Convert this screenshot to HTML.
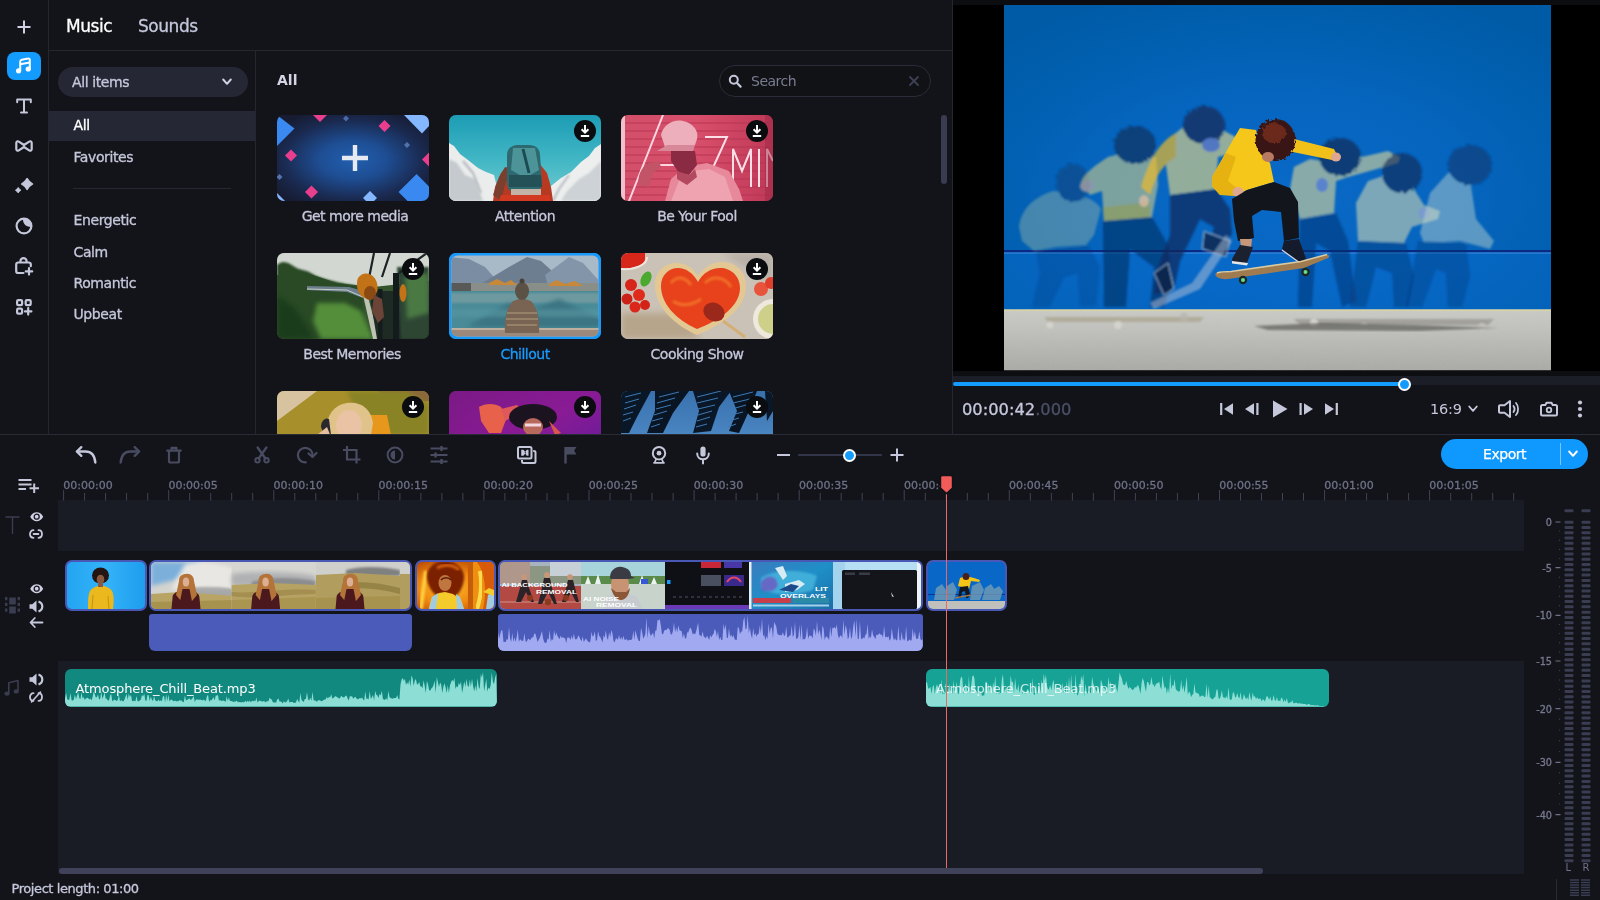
<!DOCTYPE html>
<html lang="en">
<head>
<meta charset="utf-8">
<title>Video Editor</title>
<style>
*{box-sizing:border-box;margin:0;padding:0}
html,body{width:1600px;height:900px;overflow:hidden;background:#131419}
body{position:relative;font-family:"DejaVu Sans","Liberation Sans",sans-serif;color:#c6c8dc;font-size:14px;-webkit-font-smoothing:antialiased}
.abs{position:absolute}
svg{display:block;overflow:visible}
/* borders */
.vline{position:absolute;width:1px;background:#252731}
.hline{position:absolute;height:1px;background:#252731}
/* left bar */
.lb-ic{position:absolute;left:0;width:48px;height:30px;display:flex;align-items:center;justify-content:center}
/* tabs */
.tab{position:absolute;top:15px;font-size:17px;line-height:22px;color:#c6c8dc;white-space:nowrap;letter-spacing:-.45px;-webkit-text-stroke:.32px currentColor}
/* categories */
.cat{position:absolute;left:73.500px;font-size:14px;line-height:18px;color:#c6c8dc;white-space:nowrap;letter-spacing:-.4px;-webkit-text-stroke:.32px currentColor}
/* thumbs */
.th{position:absolute;width:152px;height:86px;border-radius:7px;overflow:hidden;background:#333}
.th svg{width:152px;height:86px}
.lbl{position:absolute;width:172px;text-align:center;font-size:14px;line-height:18px;color:#c6c8dc;white-space:nowrap;letter-spacing:-.5px;-webkit-text-stroke:.32px currentColor}
.dl{position:absolute;width:22px;height:22px;border-radius:50%;background:#0d0e12}
/* timeline */
.tk{position:absolute;left:58px;width:1466px}
.clip{position:absolute;top:560px;height:51px;border:2px solid #4a59b5;border-radius:7px;overflow:hidden;background:#4a59b5}
.rl{position:absolute;top:479.200px;-webkit-text-stroke:.3px currentColor;font-family:"DejaVu Sans","Liberation Sans",sans-serif;font-size:11px;line-height:14px;color:#6f7288;white-space:nowrap}
.ml{position:absolute;width:30px;text-align:right;font-family:"DejaVu Sans","Liberation Sans",sans-serif;font-size:9.700px;line-height:12px;color:#777a90;-webkit-text-stroke:.3px currentColor}
</style>
</head>
<body>
<div id="app" style="position:absolute;left:0;top:0;width:1600px;height:900px;opacity:.999">

<!-- ===== structural lines ===== -->
<div class="vline" style="left:48px;top:0;height:434px"></div>
<div class="hline" style="left:49px;top:49.500px;width:903px"></div>
<div class="vline" style="left:255px;top:50px;height:384px"></div>
<div class="vline" style="left:952px;top:0;height:434px"></div>
<div class="hline" style="left:0;top:434px;width:1600px;background:#2a2c37"></div>

<!-- LEFTBAR -->
<svg class="abs" style="left:17px;top:19.5px" width="14" height="14" viewBox="0 0 14 14"><path d="M7 .5v13M.5 7h13" stroke="#d0d2e4" stroke-width="2" fill="none"/></svg>
<div class="abs" style="left:7px;top:52px;width:34px;height:28px;border-radius:8px;background:#149cff"></div>
<svg class="abs" style="left:15px;top:57px" width="18" height="18" viewBox="0 0 18 18"><path d="M5.2 13.2V4.6c0-1 .6-1.7 1.6-1.9l6.300-1.100c1-.2 1.700.4 1.700 1.400v8.400" fill="none" stroke="#fff" stroke-width="2" stroke-linecap="round" stroke-linejoin="round"/><path d="M5.200 7.200l9.600-1.700" stroke="#fff" stroke-width="2" fill="none"/><circle cx="3.600" cy="13.800" r="2.600" fill="#fff"/><circle cx="13.200" cy="12" r="2.600" fill="#fff"/></svg>
<svg class="abs" style="left:16px;top:98px" width="16" height="16" viewBox="0 0 16 16"><path d="M1.200 4.200V1.500h13.600v2.700M8 1.500v13M5 14.500h6" fill="none" stroke="#c6c8dc" stroke-width="2" stroke-linecap="round" stroke-linejoin="round"/></svg>
<svg class="abs" style="left:15px;top:140px" width="18" height="12" viewBox="0 0 18 12"><path d="M1.300 3c0-1.500 1.300-2.200 2.500-1.400L9 5l5.200-3.400c1.200-.8 2.500-.1 2.500 1.400v6c0 1.500-1.300 2.200-2.500 1.400L9 7l-5.200 3.400C2.600 11.200 1.300 10.500 1.300 9z" fill="none" stroke="#c6c8dc" stroke-width="2.200" stroke-linejoin="round"/></svg>
<svg class="abs" style="left:14px;top:177px" width="20" height="18" viewBox="0 0 20 18"><path d="M13.100 1.400Q15.100 5 18.700 7 15.100 9 13.100 12.600 11.100 9 7.500 7 11.100 5 13.100 1.400z" fill="#c6c8dc" stroke="#c6c8dc" stroke-width="1.200" stroke-linejoin="round"/><path d="M4.200 10.400Q5.200 12.200 7 13.200 5.200 14.200 4.200 16 3.200 14.200 1.400 13.200 3.200 12.200 4.200 10.400z" fill="#c6c8dc" stroke="#c6c8dc" stroke-width=".8" stroke-linejoin="round"/></svg>
<svg class="abs" style="left:15px;top:217px" width="18" height="18" viewBox="0 0 18 18"><circle cx="9" cy="9" r="7.400" fill="none" stroke="#c6c8dc" stroke-width="2.200"/><path d="M8.200 1.800c-.8 4 2 8.200 8 8.200 .2-4.800-3.400-8.400-8-8.200z" fill="#c6c8dc"/><path d="M9.600 2.400c-.2 3 1.800 6 6 6.400" fill="none" stroke="#131419" stroke-width="0"/></svg>
<svg class="abs" style="left:15px;top:256.500px" width="19" height="18" viewBox="0 0 19 18"><path d="M8.500 16H3.300c-1.200 0-2.100-.9-2.100-2.100V7.600c0-1.200.9-2.100 2.100-2.100h10.400c1.200 0 2.100.9 2.100 2.100v1.600" fill="none" stroke="#c6c8dc" stroke-width="2.200" stroke-linecap="round"/><path d="M5.400 5.500V4.300a3.100 3.100 0 0 1 6.200 0v1.200" fill="none" stroke="#c6c8dc" stroke-width="2.200"/><path d="M14 11.200v6.400M10.800 14.400h6.400" stroke="#c6c8dc" stroke-width="2.200" fill="none" stroke-linecap="round"/></svg>
<svg class="abs" style="left:16px;top:298.500px" width="17" height="16" viewBox="0 0 17 16"><rect x="1.100" y="1.100" width="5" height="5" rx="1.200" fill="none" stroke="#c6c8dc" stroke-width="2.200"/><rect x="9.700" y="1.100" width="5" height="5" rx="1.200" fill="none" stroke="#c6c8dc" stroke-width="2.200"/><rect x="1.100" y="9.700" width="5" height="5" rx="1.200" fill="none" stroke="#c6c8dc" stroke-width="2.200"/><path d="M12.200 9.200v6.400M9 12.400h6.400" stroke="#c6c8dc" stroke-width="2.200" fill="none" stroke-linecap="round"/></svg>
<!-- TABS -->
<div class="tab" style="left:66px;color:#fff">Music</div>
<div class="tab" style="left:138px">Sounds</div>
<!-- CATS -->
<div class="abs" style="left:58px;top:67px;width:190px;height:30px;border-radius:15px;background:#262836"></div>
<div class="cat" style="left:72px;top:73px">All items</div>
<svg class="abs" style="left:222px;top:78px" width="10" height="8" viewBox="0 0 10 8"><path d="M1.200 1.500L5 5.800 8.800 1.500" fill="none" stroke="#d0d2e4" stroke-width="2" stroke-linecap="round" stroke-linejoin="round"/></svg>
<div class="abs" style="left:49px;top:110.600px;width:206px;height:30.400px;background:#262836"></div>
<div class="cat" style="top:116px;color:#fff">All</div>
<div class="cat" style="top:148px">Favorites</div>
<div class="hline" style="left:73px;top:188px;width:158px;background:#262833"></div>
<div class="cat" style="top:211px">Energetic</div>
<div class="cat" style="top:243px">Calm</div>
<div class="cat" style="top:274px">Romantic</div>
<div class="cat" style="top:305px">Upbeat</div>
<!-- GRID -->
<svg width="0" height="0" style="position:absolute"><defs>
<filter id="b1" x="-20%" y="-20%" width="140%" height="140%"><feGaussianBlur stdDeviation="1"/></filter>
<filter id="b2" x="-20%" y="-20%" width="140%" height="140%"><feGaussianBlur stdDeviation="2"/></filter>
<filter id="b3" x="-20%" y="-20%" width="140%" height="140%"><feGaussianBlur stdDeviation="3.500"/></filter>
<filter id="b05" x="-20%" y="-20%" width="140%" height="140%"><feGaussianBlur stdDeviation=".5"/></filter>
<symbol id="dlic" viewBox="0 0 22 22"><circle cx="11" cy="11" r="11" fill="#0c0d11"/><path d="M11 5v7.200M7.600 9.200L11 12.600l3.400-3.400" fill="none" stroke="#fff" stroke-width="2" stroke-linejoin="miter"/><path d="M6.800 16h8.400" stroke="#fff" stroke-width="2"/></symbol>
</defs></svg>
<div class="abs" style="left:277px;top:71px;font-size:14px;line-height:18px;font-weight:bold;color:#d4d6e6">All</div>
<div class="abs" style="left:719px;top:65px;width:212px;height:32px;border-radius:16px;border:1px solid #2b2d3a;background:#121317"></div>
<svg class="abs" style="left:728px;top:74px" width="14" height="14" viewBox="0 0 14 14"><circle cx="5.800" cy="5.800" r="4" fill="none" stroke="#c6c8dc" stroke-width="2"/><path d="M9 9l3.600 3.600" stroke="#c6c8dc" stroke-width="2.200" stroke-linecap="round"/></svg>
<div class="abs" style="left:751px;top:72px;font-size:14px;line-height:18px;color:#7a7d92;letter-spacing:-.5px">Search</div>
<svg class="abs" style="left:909px;top:76px" width="10" height="10" viewBox="0 0 10 10"><path d="M1 1l8 8M9 1L1 9" stroke="#3f4256" stroke-width="1.800" stroke-linecap="round"/></svg>
<div class="abs" style="left:941px;top:115px;width:6px;height:69px;border-radius:3px;background:#3a3d52"></div>

<!-- thumb 1 -->
<div class="th" style="left:277px;top:115px"><svg viewBox="0 0 152 86">
<defs><radialGradient id="g1" cx="50%" cy="52%" r="62%"><stop offset="0" stop-color="#2360b0"/><stop offset=".35" stop-color="#1f4f95"/><stop offset=".75" stop-color="#1b2a50"/><stop offset="1" stop-color="#181d33"/></radialGradient></defs>
<rect width="152" height="86" fill="url(#g1)"/>
<path d="M0 0v31l17.500-17.500z" fill="#3b8af2"/>
<path d="M36 0l7 7 7-7z" fill="#ea3f8e"/>
<path d="M69 0.500l3 3-3 3-3-3z" fill="#4a6aa8"/>
<path d="M107.500 5l6 6-6 6-6-6z" fill="#ea3f8e"/>
<path d="M127 0h25v11l-7 7.500z" fill="#86b8ff"/>
<path d="M130 27l3 3-3 3-3-3z" fill="#5474ae"/>
<path d="M14 34.500l6 6-6 6-6-6z" fill="#ea3f8e"/>
<path d="M152 37.500l-7 7 7 7z" fill="#ea3f8e"/>
<path d="M2.500 59l3 3-3 3-3-3z" fill="#5474ae"/>
<path d="M34.500 70.500l6.500 6.500-6.500 6.500-6.500-6.500z" fill="#ea3f8e"/>
<path d="M93 76l7 7-3 3H89l-3-3z" fill="#86b8ff"/>
<path d="M139.600 59l12.400 12.400V86h-21.500l-9-9z" fill="#3b8af2"/>
<path d="M0 78l8 8H0z" fill="#86b8ff"/>
<path d="M78 30v26M65 43h26" stroke="#e8eaf4" stroke-width="4.400"/>
</svg></div>

<!-- thumb 2 attention -->
<div class="th" style="left:449px;top:115px"><svg viewBox="0 0 152 86">
<defs><linearGradient id="g2" x1="0" y1="0" x2="0" y2="1"><stop offset="0" stop-color="#1d9db6"/><stop offset=".55" stop-color="#45b9c6"/><stop offset="1" stop-color="#74ccd0"/></linearGradient></defs>
<rect width="152" height="86" fill="url(#g2)"/>
<path d="M0 28l5 3 6 8 8 6 10 8 8 4 8 3 2 8 -2 18H0z" fill="#eceeee"/>
<path d="M0 44l8 4 8 12 10 4 8 22H0z" fill="#c5cbce" filter="url(#b1)"/>
<path d="M14 46l10 12 8 20" stroke="#b0b6ba" stroke-width="2" fill="none" filter="url(#b1)"/>
<path d="M152 29l-6 4-6 8-8 6-10 10-10 6-10 8-8 8-2 7h60z" fill="#eef0f0"/>
<path d="M152 46l-12 12-10 6-12 12-6 10h40z" fill="#cdd3d6" filter="url(#b1)"/>
<path d="M120 60l-10 14-6 12" stroke="#b4babd" stroke-width="2" fill="none" filter="url(#b1)"/>
<path d="M44 86l2-14 6-14 8-8 30-2 8 10 4 14 2 14z" fill="#b83a22"/>
<path d="M44 80l6-18 6-10 6 2-6 16-4 16z" fill="#7c4030"/>
<path d="M58 40c0-6 4-10 12-10h10c7 0 11 4 11 10l2 28c0 6-4 9-9 9H66c-5 0-8-3-8-9z" fill="#2f6a70"/>
<path d="M64 33h22l4 22-14 8-14-8z" fill="#4e959a"/>
<path d="M74 34l6 24" stroke="#1f4c52" stroke-width="3" filter="url(#b05)"/>
<path d="M60 60h32l1 12H60z" fill="#245258"/>
<path d="M62 74h30v6H62z" fill="#c4b4a8"/>
<path d="M52 80h48l2 6H50z" fill="#d23a22"/>
</svg></div>
<svg class="abs" style="left:573.800px;top:120.200px" width="22" height="22"><use href="#dlic"/></svg>

<!-- thumb 3 be your fool -->
<div class="th" style="left:621px;top:115px"><svg viewBox="0 0 152 86">
<defs><linearGradient id="g3" x1="0" y1="0" x2="1" y2="0"><stop offset="0" stop-color="#d4506a"/><stop offset=".5" stop-color="#d9506c"/><stop offset="1" stop-color="#c03a58"/></linearGradient></defs>
<rect width="152" height="86" fill="url(#g3)"/>
<g stroke="#b83654" stroke-width="1"><path d="M0 8h152M0 16h152M0 24h152M0 32h152M0 40h152M0 48h152M0 56h152M0 64h152M0 72h152M0 80h152"/></g>
<path d="M42 0L8 86M36 50h22" stroke="#ffd6e0" stroke-width="2" fill="none"/>
<path d="M84 22h22L84 70M112 72V34l9 22 9-22v38M138 34v38M146 72V34l6 12" stroke="#ffe0e8" stroke-width="2" fill="none"/>
<path d="M44 86l6-22 14-12 22-4 22 8 10 18 4 12z" fill="#e88a9c"/>
<path d="M50 86l8-20 12-10 18-2 16 8 8 24z" fill="#f0a4b2"/>
<path d="M18 70c-2-8 2-18 10-22l10-2 2 6-8 6-4 14z" fill="#c45468"/>
<path d="M40 20c2-10 12-16 22-14 10 2 16 10 14 18l-2 6-30 2z" fill="#eeb0bc"/>
<path d="M36 36l10-6h28l-2 6z" fill="#d88a9a"/>
<path d="M50 36h24l2 14-8 10-10-2-8-12z" fill="#8c2c44"/>
<path d="M56 56l12 4 6-6 2 8-10 8-10-6z" fill="#b44a60"/>
<rect x="0" y="0" width="4" height="86" fill="#f4c0cc"/>
<rect x="144" y="0" width="8" height="86" fill="#9c2a46" opacity=".5"/>
</svg></div>
<svg class="abs" style="left:745.800px;top:120.200px" width="22" height="22"><use href="#dlic"/></svg>

<div class="lbl" style="left:269px;top:207px">Get more media</div>
<div class="lbl" style="left:439px;top:207px">Attention</div>
<div class="lbl" style="left:611px;top:207px">Be Your Fool</div>

<!-- thumb 4 best memories -->
<div class="th" style="left:277px;top:253px"><svg viewBox="0 0 152 86">
<rect width="152" height="86" fill="#35562f"/>
<path d="M0 0h152v28L96 34 60 30 30 20 0 22z" fill="#d3d9d2"/>
<path d="M0 12c6-6 12-2 18 2s10 2 16 6 14 6 22 8 18 4 30 6v52H0z" fill="#2b4c27" filter="url(#b1)"/>
<path d="M40 50l28 0 16 8 12 28H44l-8-18z" fill="#558f3a" filter="url(#b2)"/>
<path d="M0 44c10 4 18 10 24 20s10 14 12 22H0z" fill="#1f3d1e" filter="url(#b2)"/>
<path d="M30 33l42 1 14 4 8 10-8-3-16-6-40-2z" fill="#6d7f8e"/>
<path d="M30 36l40 1 16 7" stroke="#c9cfc8" stroke-width="1" fill="none"/>
<path d="M86 42l10 44h6l-12-46z" fill="#bfc4b4"/>
<path d="M92 38h60v48H100z" fill="#1f2c26"/>
<path d="M120 14h32v72h-28z" fill="#2f4736" filter="url(#b1)"/>
<path d="M128 24l24-4v40l-22 6z" fill="#4c7a44" filter="url(#b2)"/>
<path d="M97 0l-6 30M113 0l-8 24M150 0l-28 20" stroke="#1c2426" stroke-width="2.200"/>
<path d="M116 20h6v66h-6zM101 36h4.500v50H101z" fill="#151c1e"/>
<path d="M84 22c6-4 14 0 16 8s-2 16-8 16-12-6-12-14 2-8 4-10z" fill="#c47418"/>
<ellipse cx="93" cy="40" rx="6" ry="7" fill="#8c4a14"/>
<path d="M97 42l8 4 2 18-6 6-6-12z" fill="#6c4438"/>
<ellipse cx="126" cy="40" rx="3.500" ry="9" fill="#c47418"/>
</svg></div>
<svg class="abs" style="left:401.800px;top:258.200px" width="22" height="22"><use href="#dlic"/></svg>

<!-- thumb 5 chillout (selected) -->
<div class="th" style="left:449px;top:253px;background:#1a9bfc"><svg viewBox="0 0 152 86">
<defs><clipPath id="c5"><rect x="2.500" y="2.500" width="147" height="81" rx="6"/></clipPath></defs>
<rect width="152" height="86" fill="#1a9bfc"/>
<g clip-path="url(#c5)">
<rect width="152" height="86" fill="#a9bac8"/>
<path d="M0 4l20 2 16 8 14 16H0z" fill="#7b8ea4"/>
<path d="M30 32l30-18 18-10 14 4 20 18 10 6H30z" fill="#6f7f92"/>
<path d="M96 22l24-18 14 6 18 20v6H100z" fill="#8496aa"/>
<rect x="0" y="30" width="152" height="10" fill="#8a8f8a"/>
<path d="M0 30h22v8H0z" fill="#5a5a58"/>
<path d="M40 30l8-4 8 4 6-3 6 5H40zM100 31l8-4 8 4 10-3 8 5h-34z" fill="#c88a3a"/>
<rect x="0" y="38" width="152" height="40" fill="#4a8c98"/>
<path d="M0 40h152v10H0z" fill="#6e9aa0" filter="url(#b1)"/>
<path d="M20 72l40-22 20 8 30-12 42 20v8H20z" fill="#3c7684" filter="url(#b2)"/>
<path d="M0 56h152v8H0z" fill="#5a9aa4" opacity=".6" filter="url(#b2)"/>
<rect x="0" y="75" width="152" height="11" fill="#9c8a7c"/>
<path d="M0 75h152v2H0z" fill="#c0b0a0"/>
<path d="M56 80c-1-14 2-26 8-32l6-2h6l6 2c6 6 9 18 8 32z" fill="#7a6454"/>
<path d="M58 60h30M57 66h32M58 72h30" stroke="#a08a70" stroke-width="1.500"/>
<ellipse cx="73" cy="38" rx="7" ry="9" fill="#5c5246"/>
<ellipse cx="73" cy="28" rx="2.500" ry="2.500" fill="#4a423a"/>
</g>
</svg></div>

<!-- thumb 6 cooking show -->
<div class="th" style="left:621px;top:253px"><svg viewBox="0 0 152 86">
<rect width="152" height="86" fill="#cbc3b8"/>
<path d="M0 60h60l20 26H0z" fill="#b8a68c" filter="url(#b3)"/>
<path d="M100 0h52v30z" fill="#b8b0a8" filter="url(#b3)"/>
<path d="M0 0h24v6c0 6-10 10-24 9z" fill="#d8281c"/>
<path d="M0 16c14 1 26-4 26-12" fill="none" stroke="#efe8e0" stroke-width="2"/>
<ellipse cx="25" cy="26" rx="5" ry="8" fill="#4caa30" transform="rotate(25 25 26)"/>
<path d="M76 82C50 70 34 52 34 32c0-14 10-22 22-22 9 0 16 5 21 13 5-8 14-14 24-14 14 0 24 10 24 24 0 22-22 38-49 49z" fill="#e4c994"/>
<path d="M76 76C54 66 40 50 40 33c0-11 8-18 17-18 8 0 15 5 20 14 5-9 13-14 22-14 11 0 20 8 20 20 0 18-20 32-43 41z" fill="#e8431c"/>
<path d="M50 30c6-8 14-6 20 2M84 30c8-8 20-6 26 4M52 48c8 6 20 4 28-2" stroke="#f2702a" stroke-width="3" fill="none" filter="url(#b1)"/>
<ellipse cx="93" cy="59" rx="11" ry="9" fill="#9c2a1c" transform="rotate(25 93 59)"/>
<path d="M102 68l22 16" stroke="#d4b078" stroke-width="3"/>
<circle cx="10" cy="32" r="6" fill="#d8261a"/><circle cx="18" cy="42" r="6" fill="#e02c1c"/><circle cx="6" cy="46" r="5.500" fill="#cc2218"/><circle cx="14" cy="54" r="5.500" fill="#dc281a"/><circle cx="24" cy="52" r="5" fill="#d42418"/>
<circle cx="140" cy="36" r="7" fill="#e8543c"/><circle cx="150" cy="30" r="6" fill="#e0402c"/>
<circle cx="152" cy="66" r="20" fill="#efe9de"/><circle cx="152" cy="66" r="15" fill="#cfd08a"/>
</svg></div>
<svg class="abs" style="left:745.800px;top:258.200px" width="22" height="22"><use href="#dlic"/></svg>

<div class="lbl" style="left:266px;top:345px">Best Memories</div>
<div class="lbl" style="left:439px;top:345px;color:#1a9bfc">Chillout</div>
<div class="lbl" style="left:611px;top:345px">Cooking Show</div>

<!-- row 3 (clipped at 433) -->
<div class="abs" style="left:277px;top:391px;width:496px;height:43px;overflow:hidden">
<div class="th" style="left:0;top:0"><svg viewBox="0 0 152 86">
<rect width="152" height="86" fill="#a8902c"/>
<path d="M0 0h40L0 30z" fill="#d8c4a0"/>
<path d="M100 0h52v10l-30 2z" fill="#8c6a3c"/>
<path d="M70 0h60l22 14v30H90z" fill="#8a8428" filter="url(#b2)"/>
<path d="M88 24h22l4 20H92z" fill="#e8981c"/>
<path d="M50 42c-2-16 6-28 20-30s24 6 26 20l-2 12-40 2z" fill="#e0c48c"/>
<ellipse cx="72" cy="34" rx="13" ry="15" fill="#eac4a4"/>
<path d="M44 36c0-6 4-10 8-8l2 16-6 2z" fill="#2a2a30"/>
<path d="M40 44l10-8 4 10z" fill="#e8c0a0"/>
</svg></div>
<div class="th" style="left:172px;top:0"><svg viewBox="0 0 152 86">
<defs><linearGradient id="g8" x1="0" y1="0" x2="1" y2="1"><stop offset="0" stop-color="#7c1a86"/><stop offset=".5" stop-color="#8a1c96"/><stop offset="1" stop-color="#5c1c9c"/></linearGradient></defs>
<rect width="152" height="86" fill="url(#g8)"/>
<path d="M30 16c6-4 16-4 22 0l6 10-6 16H40l-8-12z" fill="#e8624c"/>
<path d="M52 18l16-4 6 6-18 10z" fill="#e05a5c"/>
<ellipse cx="84" cy="26" rx="24" ry="13" fill="#1c1420"/>
<ellipse cx="84" cy="36" rx="10" ry="9" fill="#b86a5c"/>
<path d="M76 34h16" stroke="#f4d8e0" stroke-width="3"/>
<path d="M100 30l12 12-6 2z" fill="#d8584c"/>
</svg></div>
<div class="th" style="left:344px;top:0"><svg viewBox="0 0 152 86">
<defs><linearGradient id="g9" x1="0" y1="0" x2="0" y2="1"><stop offset="0" stop-color="#3a72ae"/><stop offset=".5" stop-color="#4a86c2"/><stop offset="1" stop-color="#b0689c"/></linearGradient></defs>
<rect width="152" height="86" fill="url(#g9)"/>
<path d="M0 0h30L16 26 8 42H0z" fill="#0b1828"/>
<path d="M34 0h34L52 22 42 42H26l8-22z" fill="#0a1624"/>
<path d="M72 0h38L98 16 90 40 72 42l6-22z" fill="#0b1828"/>
<path d="M108 0h28l-8 20-10 22-10-2 8-20z" fill="#0a1624"/>
<path d="M144 0h8v20l-6 10z" fill="#0b1828"/>
<g stroke="#3f7ab6" stroke-width="1" fill="none"><path d="M4 6l16-4M4 12l14-4M3 18l12-4M2 24l10-3M2 30l8-3M38 6l20-5M36 12l18-5M35 18l15-4M33 24l13-4M31 30l11-3M30 36l9-3M76 6l24-6M76 12l21-5M77 18l17-4M77 24l14-4M76 30l13-4M75 36l11-3M112 6l20-5M112 12l17-4M111 18l14-4M110 24l12-3M108 30l10-3M107 36l8-3"/></g>
</svg></div>
</div>
<svg class="abs" style="left:401.800px;top:396.200px" width="22" height="22"><use href="#dlic"/></svg>
<svg class="abs" style="left:573.800px;top:396.200px" width="22" height="22"><use href="#dlic"/></svg>
<svg class="abs" style="left:745.800px;top:396.200px" width="22" height="22"><use href="#dlic"/></svg>
<!-- PREVIEW -->
<div class="abs" style="left:953px;top:0;width:647px;height:434px;background:#131419"></div>
<div class="abs" style="left:953px;top:0;width:647px;height:5px;background:#0d0e12"></div>
<div class="abs" style="left:953px;top:5px;width:647px;height:366px;background:#000"></div>
<div class="abs" style="left:953px;top:371px;width:647px;height:5px;background:#0e0f13"></div>
<div class="abs" style="left:953px;top:376px;width:647px;height:9px;background:#1c1e28"></div>
<svg class="abs" style="left:1004px;top:5px" width="547" height="365.500" viewBox="0 0 547 365.500">
<defs>
<radialGradient id="wall" cx="50%" cy="62%" r="70%"><stop offset="0" stop-color="#0a6ac8"/><stop offset=".45" stop-color="#0766c0"/><stop offset=".8" stop-color="#0260b0"/><stop offset="1" stop-color="#005ca8"/></radialGradient>
<linearGradient id="flr" x1="0" y1="0" x2="0" y2="1"><stop offset="0" stop-color="#cdcec9"/><stop offset=".35" stop-color="#c2c3be"/><stop offset="1" stop-color="#a9aaa6"/></linearGradient>
<filter id="pb1" x="-10%" y="-10%" width="120%" height="120%"><feGaussianBlur stdDeviation="1.200"/></filter>
<filter id="pb2" x="-10%" y="-10%" width="120%" height="120%"><feGaussianBlur stdDeviation="2.500"/></filter>
<filter id="hairf" x="-20%" y="-20%" width="140%" height="140%"><feTurbulence type="fractalNoise" baseFrequency=".35" numOctaves="2" seed="3" result="n"/><feDisplacementMap in="SourceGraphic" in2="n" scale="5"/></filter>
<filter id="grain" x="0" y="0" width="100%" height="100%"><feTurbulence type="fractalNoise" baseFrequency=".9" numOctaves="2" seed="7"/><feColorMatrix type="matrix" values="0 0 0 0 .5  0 0 0 0 .5  0 0 0 0 .48  0 0 0 .55 0"/><feComposite in2="SourceGraphic" operator="in"/></filter>
<clipPath id="vclip"><rect width="547" height="365.500"/></clipPath>
</defs>
<g clip-path="url(#vclip)">
<rect width="547" height="306" fill="url(#wall)"/>
<rect y="247" width="547" height="59" fill="#0d70da" opacity=".3"/>
<rect y="245" width="547" height="2.400" fill="#0a2a86"/>
<rect y="247.400" width="547" height="1.200" fill="#4a9ae8" opacity=".7"/>
<rect y="304.500" width="547" height="61" fill="url(#flr)"/>
<rect y="304.500" width="547" height="61" fill="#fff" filter="url(#grain)" opacity=".5"/>
<rect y="304.500" width="547" height="1.600" fill="#d8d4a8"/>

<!-- ghost figures -->
<g filter="url(#pb1)">
 <!-- G1 -->
 <g opacity=".32">
  <path d="M15 222C17 204 30 192 49 186L72 190C86 192 94 198 97 204L90 230 82 240 52 242 30 246 18 236Z" fill="#cfd6a0"/>
  <ellipse cx="69" cy="178" rx="17" ry="19" fill="#14284e" filter="url(#hairf)"/>
  <path d="M32 246L84 240 96 262 92 301H76L74 268 60 272 46 302H28L36 268Z" fill="#0a2c62" opacity=".6"/>
 </g>
 <!-- G2 -->
 <g opacity=".58">
  <path d="M77 178C80 168 92 160 104 152L128 146 152 152 154 180 148 212 100 216 98 186 86 190Z" fill="#d4cf8a"/>
  <path d="M99 202L146 197 146 214 100 217Z" fill="#e8c838"/>
  <ellipse cx="131" cy="140" rx="21" ry="19" fill="#16264a" filter="url(#hairf)"/>
  <ellipse cx="83" cy="181" rx="7" ry="6" fill="#e8c0a8"/>
  <path d="M99 216L148 212 164 240 168 280 160 302H146L150 262 126 244 122 302H100Z" fill="#0c2c60"/>
 </g>
 <!-- G3 -->
 <g opacity=".70">
  <path d="M172 128L186 116 212 122 236 134 236 146 214 152 212 184 166 190 162 160Z" fill="#d0cc8c"/>
  <path d="M172 128C160 134 146 150 137 182L146 190C152 170 160 158 172 152Z" fill="#ecbc2c"/>
  <ellipse cx="200" cy="120" rx="21" ry="19" fill="#1a2a54" filter="url(#hairf)"/>
  <ellipse cx="207" cy="140" rx="9" ry="7" fill="#7480c4"/>
  <ellipse cx="140" cy="196" rx="5" ry="6" fill="#e8c0a8"/>
  <path d="M166 190L212 184 226 204 228 228 216 250 204 244 210 222 196 214 176 256 170 284 150 290 152 268 166 230Z" fill="#0c2a5c"/>
  <path d="M200 226L226 236 222 252 198 244Z" fill="#0a1a38" stroke="#c8d4e8" stroke-width="1"/>
  <path d="M150 268L164 258 170 284 160 290Z" fill="#0a1a38" stroke="#c8d4e8" stroke-width="1"/>
 </g>
 <path d="M222 230L228 236 196 284 150 304 146 298 188 278Z" fill="#b8c4d8" opacity=".5"/>
 <!-- G4 -->
 <g opacity=".64">
  <path d="M290 162L306 154 332 158 384 146 396 152 394 158 344 172 332 176 330 208 296 214 286 184Z" fill="#d2d29c"/>
  <ellipse cx="336" cy="152" rx="21" ry="19" fill="#15264e" filter="url(#hairf)"/>
  <ellipse cx="318" cy="180" rx="6" ry="7" fill="#8a94d4"/>
  <path d="M296 214L332 208 344 236 352 296 338 302 326 246 312 238 308 302H294Z" fill="#0c3270" opacity=".8"/>
 </g>
 <!-- G5 -->
 <g opacity=".6">
  <path d="M352 198L364 176 388 168 406 178 420 200 436 206 434 214 408 222 400 238 354 236Z" fill="#ccd4b4"/>
  <ellipse cx="398" cy="168" rx="20" ry="20" fill="#142650" filter="url(#hairf)"/>
  <ellipse cx="420" cy="208" rx="6" ry="6" fill="#c8c0d8"/>
  <path d="M354 236L402 238 410 272 404 302H390L388 268 372 262 362 302H346Z" fill="#0c3474" opacity=".7"/>
 </g>
 <!-- G6 -->
 <g opacity=".46">
  <path d="M416 228L426 188 444 168 466 174 472 214 490 236 486 244 456 236 420 238Z" fill="#c4d8d0"/>
  <ellipse cx="466" cy="160" rx="22" ry="20" fill="#142c5c" filter="url(#hairf)"/>
  <path d="M414 236L462 238 466 272 458 302H444L442 268 432 264 418 302H402Z" fill="#0c3474" opacity=".7"/>
 </g>
 <!-- ghost boards on floor -->
 <path d="M40 312h160l-4 5H44z" fill="#a9a48c" opacity=".7"/>
 <path d="M290 314h200l-6 6H296z" fill="#8c8a84" opacity=".6"/>
 <circle cx="46" cy="320" r="3.500" fill="#d8d8d0" opacity=".8"/><circle cx="114" cy="320" r="4" fill="#d8d8d0" opacity=".8"/><circle cx="180" cy="312" r="4" fill="#b8b8b0" opacity=".8"/>
 <circle cx="310" cy="318" r="4" fill="#e0e0da" opacity=".8"/><circle cx="360" cy="322" r="4" fill="#c8c8c0" opacity=".8"/><circle cx="478" cy="322" r="4" fill="#c8c8c0" opacity=".8"/>
</g>
<!-- floor shadow -->
<path d="M250 321l70-3 90 2 84 3-80 3-150-1z" fill="#4c4c4a" opacity=".6" filter="url(#pb1)"/>

<!-- main figure -->
<g>
 <!-- right arm -->
 <path d="M286 133L330 144 333 150 328 155 284 146Z" fill="#f2c21a"/>
 <ellipse cx="332" cy="152" rx="5" ry="4.500" fill="#e0a890"/>
 <!-- hoodie -->
 <path d="M236 123L252 125 258 150 266 158 270 177 243 185 232 190 216 190 208 181 208 172 226 140Z" fill="#f6c81c"/>
 <path d="M208 181L208 172 222 148 232 152 224 176 234 184 230 191 216 190Z" fill="#e6b312"/>
 <ellipse cx="234" cy="187" rx="5.500" ry="5" fill="#e0a890"/>
 <!-- pants -->
 <path d="M228 194L243 185 270 177 286 183 294 197 295 233 280 236 277 207 258 205 248 211 250 233 234 236 230 216Z" fill="#14161e"/>
 <path d="M236 234h12l-1 9h-10z" fill="#c89878"/>
 <!-- shoes -->
 <path d="M228 254L236 240 249 242 243 258 229 258Z" fill="#1c2230"/><path d="M228 256l16 2-1 2.500-15-2z" fill="#e8e8e8"/>
 <path d="M280 236L295 234 302 254 296 258 278 244Z" fill="#161c2c"/><path d="M278 245l18 13" stroke="#d8d8e0" stroke-width="1.200"/>
 <!-- hair -->
 <ellipse cx="271.500" cy="135" rx="20" ry="21" fill="#3a1812" filter="url(#hairf)"/>
 <ellipse cx="270" cy="128" rx="12" ry="10" fill="#6c2c1c" filter="url(#hairf)"/>
 <ellipse cx="264" cy="152" rx="6" ry="5" fill="#b87c64"/>
 <!-- skateboard -->
 <path d="M212 268c3-1 8-1 14-1l70-10 26-7c3-1 4 2 2 3l-24 10-76 11c-8 1-15-3-12-6z" fill="#a07c50"/>
 <path d="M213 268c3-1 8-1.500 14-1.500l70-10 26-7" stroke="#dccaa0" stroke-width="1.600" fill="none"/>
 <circle cx="239" cy="275" r="4.200" fill="#1c2a20"/><circle cx="239" cy="275" r="2" fill="#6adc8c"/>
 <circle cx="301.500" cy="267" r="4.200" fill="#1c2a20"/><circle cx="301.500" cy="267" r="2" fill="#6adc8c"/>
</g>
</g>
</svg>

<!-- progress -->
<div class="abs" style="left:953px;top:382px;width:451px;height:4px;border-radius:2px;background:#149cff"></div>
<div class="abs" style="left:1397.500px;top:377.500px;width:13px;height:13px;border-radius:50%;background:#149cff;border:2px solid #fff"></div>
<!-- time -->
<div class="abs" style="left:962px;top:400px;font-family:'DejaVu Sans','Liberation Sans',sans-serif;font-size:16.300px;line-height:20px;color:#c6c8dc;-webkit-text-stroke:.32px currentColor;white-space:nowrap">00:00:42<span style="color:#4d5066">.000</span></div>
<!-- transport -->
<svg class="abs" style="left:1219px;top:401px" width="16" height="16" viewBox="0 0 16 16"><path d="M2.200 2v12" stroke="#c6c8dc" stroke-width="2.200"/><path d="M14 2.200v11.600L5 8z" fill="#c6c8dc"/></svg>
<svg class="abs" style="left:1244px;top:401px" width="16" height="16" viewBox="0 0 16 16"><path d="M13.400 2v12" stroke="#c6c8dc" stroke-width="2.200"/><path d="M10 2.200v11.600L1 8z" fill="#c6c8dc"/></svg>
<svg class="abs" style="left:1271px;top:399px" width="18" height="20" viewBox="0 0 18 20"><path d="M2 1.500v17L16.500 10z" fill="#c6c8dc"/></svg>
<svg class="abs" style="left:1298px;top:401px" width="16" height="16" viewBox="0 0 16 16"><path d="M2.600 2v12" stroke="#c6c8dc" stroke-width="2.200"/><path d="M6 2.200v11.600L15 8z" fill="#c6c8dc"/></svg>
<svg class="abs" style="left:1323px;top:401px" width="16" height="16" viewBox="0 0 16 16"><path d="M13.800 2v12" stroke="#c6c8dc" stroke-width="2.200"/><path d="M2 2.200v11.600L11 8z" fill="#c6c8dc"/></svg>
<div class="abs" style="left:1430px;top:399px;font-family:'DejaVu Sans','Liberation Sans',sans-serif;font-size:14.500px;line-height:20px;color:#c6c8dc;letter-spacing:-.2px">16:9</div>
<svg class="abs" style="left:1468px;top:405px" width="10" height="8" viewBox="0 0 10 8"><path d="M1.200 1.500L5 5.800 8.800 1.500" fill="none" stroke="#c6c8dc" stroke-width="1.800" stroke-linecap="round" stroke-linejoin="round"/></svg>
<svg class="abs" style="left:1497px;top:399px" width="24" height="20" viewBox="0 0 24 20"><path d="M2 7.200c0-.6.400-1 1-1h4.500L13 2v16l-5.500-4.200H3c-.6 0-1-.4-1-1z" fill="none" stroke="#c6c8dc" stroke-width="2" stroke-linejoin="round"/><path d="M16.500 7c1.200 1.600 1.200 4.400 0 6" fill="none" stroke="#c6c8dc" stroke-width="1.800" stroke-linecap="round"/><path d="M19 4c2.800 3 2.800 9 0 12" fill="none" stroke="#c6c8dc" stroke-width="1.800" stroke-linecap="round"/></svg>
<svg class="abs" style="left:1540px;top:401px" width="18" height="16" viewBox="0 0 18 16"><path d="M2.500 4h2.800l1.200-2.200h5l1.200 2.200h2.800c.8 0 1.500.7 1.500 1.500v7.500c0 .8-.7 1.500-1.500 1.500h-13c-.8 0-1.500-.7-1.500-1.500V5.500c0-.8.700-1.500 1.500-1.500z" fill="none" stroke="#c6c8dc" stroke-width="2" stroke-linejoin="round"/><circle cx="9" cy="9" r="2.300" fill="none" stroke="#c6c8dc" stroke-width="1.800"/></svg>
<svg class="abs" style="left:1577px;top:399px" width="6" height="20" viewBox="0 0 6 20"><circle cx="3" cy="3.500" r="2.100" fill="#c6c8dc"/><circle cx="3" cy="10" r="2.100" fill="#c6c8dc"/><circle cx="3" cy="16.500" r="2.100" fill="#c6c8dc"/></svg>
<!-- TOOLBAR -->
<!-- undo -->
<svg class="abs" style="left:75px;top:446px" width="22" height="18" viewBox="0 0 22 18"><path d="M6.300 1.200L1.800 5.500l4.500 4.300" fill="none" stroke="#c6c8dc" stroke-width="2.400" stroke-linecap="round" stroke-linejoin="round"/><path d="M2.500 5.500h8c5.500 0 9.200 3.800 9.800 11" fill="none" stroke="#c6c8dc" stroke-width="2.400" stroke-linecap="round"/></svg>
<!-- redo -->
<svg class="abs" style="left:119px;top:446px" width="22" height="18" viewBox="0 0 22 18"><path d="M15.700 1.200l4.500 4.300-4.500 4.300" fill="none" stroke="#4a4d62" stroke-width="2.400" stroke-linecap="round" stroke-linejoin="round"/><path d="M19.500 5.500h-8C6 5.500 2.300 9.300 1.700 16.500" fill="none" stroke="#4a4d62" stroke-width="2.400" stroke-linecap="round"/></svg>
<!-- trash -->
<svg class="abs" style="left:166px;top:446px" width="16" height="18" viewBox="0 0 16 18"><path d="M1.200 4.600h13.600M5.600 4V1.800h4.800V4" fill="none" stroke="#4a4d62" stroke-width="2.200" stroke-linecap="round" stroke-linejoin="round"/><path d="M3 5v10c0 .8.700 1.500 1.500 1.500h7c.8 0 1.500-.7 1.500-1.500V5" fill="none" stroke="#4a4d62" stroke-width="2.200"/></svg>
<!-- scissors -->
<svg class="abs" style="left:254px;top:446px" width="16" height="18" viewBox="0 0 16 18"><path d="M3.600 1.500l7.800 11M12.400 1.500l-7.800 11" stroke="#4a4d62" stroke-width="2.300" fill="none" stroke-linecap="round"/><circle cx="3.500" cy="14.300" r="2.200" fill="none" stroke="#4a4d62" stroke-width="2"/><circle cx="12.500" cy="14.300" r="2.200" fill="none" stroke="#4a4d62" stroke-width="2"/></svg>
<!-- rotate -->
<svg class="abs" style="left:296px;top:445px" width="22" height="20" viewBox="0 0 22 20"><path d="M16.500 10.500A7.300 7.300 0 1 0 9.800 17.400" fill="none" stroke="#4a4d62" stroke-width="2.200" stroke-linecap="round"/><path d="M12.500 8.500l4 3.500 4-4" fill="none" stroke="#4a4d62" stroke-width="2.200" stroke-linecap="round" stroke-linejoin="round"/></svg>
<!-- crop -->
<svg class="abs" style="left:342px;top:445px" width="20" height="20" viewBox="0 0 20 20"><path d="M5 1v13.500h13.500M1 5h13.500v13.500" fill="none" stroke="#4a4d62" stroke-width="2.200" stroke-linejoin="miter"/></svg>
<!-- color -->
<svg class="abs" style="left:386px;top:446px" width="18" height="18" viewBox="0 0 18 18"><circle cx="9" cy="9" r="7.400" fill="none" stroke="#4a4d62" stroke-width="2"/><path d="M9 4.500a4.500 4.500 0 0 0 0 9z" fill="#4a4d62"/></svg>
<!-- sliders -->
<svg class="abs" style="left:430px;top:446px" width="18" height="18" viewBox="0 0 18 18"><path d="M.5 2.500h17M.5 9h17M.5 15.500h17" stroke="#4a4d62" stroke-width="1.800"/><path d="M11.500 0v5M5.500 6.500v5M11.500 13v5" stroke="#4a4d62" stroke-width="2.400"/></svg>
<!-- transition wizard -->
<svg class="abs" style="left:517px;top:446px" width="20" height="18" viewBox="0 0 20 18"><rect x="1" y="1" width="13.500" height="11.500" rx="1.500" fill="none" stroke="#c6c8dc" stroke-width="2"/><path d="M5 14v1.500c0 .8.700 1.500 1.500 1.500H17c.8 0 1.500-.7 1.500-1.500V6.500c0-.8-.7-1.500-1.500-1.500h-.8" fill="none" stroke="#c6c8dc" stroke-width="2"/><path d="M4.200 3.800h2.200L9 6.800 6.400 9.800H4.200zM11.500 3.800H9.800L7.600 6.800l2.200 3h1.700z" fill="#c6c8dc"/></svg>
<!-- flag -->
<svg class="abs" style="left:564px;top:446px" width="14" height="18" viewBox="0 0 14 18"><path d="M1.500 1v16.500" stroke="#4a4d62" stroke-width="2.400"/><path d="M2 1h10.500l-2.400 3.800 2.400 3.800H2z" fill="#4a4d62"/></svg>
<!-- webcam -->
<svg class="abs" style="left:651px;top:446px" width="16" height="18" viewBox="0 0 16 18"><circle cx="8" cy="7.200" r="6.200" fill="none" stroke="#c6c8dc" stroke-width="2"/><circle cx="8" cy="7.200" r="2.400" fill="#c6c8dc"/><path d="M3 16.800h10M5 13.500l-1.200 3M11 13.500l1.200 3" stroke="#c6c8dc" stroke-width="1.800" stroke-linecap="round"/></svg>
<!-- mic -->
<svg class="abs" style="left:696px;top:446px" width="14" height="18" viewBox="0 0 14 18"><rect x="4.400" y=".5" width="5.200" height="10" rx="2.600" fill="#c6c8dc"/><path d="M1.200 7.500c0 3.400 2.600 5.800 5.800 5.800s5.800-2.400 5.800-5.800M7 13.500v4" fill="none" stroke="#c6c8dc" stroke-width="2" stroke-linecap="round"/></svg>
<!-- zoom slider -->
<div class="abs" style="left:777px;top:454px;width:13px;height:2px;background:#c6c8dc"></div>
<div class="abs" style="left:798px;top:454px;width:84px;height:2px;background:#33364a"></div>
<div class="abs" style="left:842.500px;top:448.500px;width:13px;height:13px;border-radius:50%;background:#149cff;border:2px solid #fff"></div>
<svg class="abs" style="left:890px;top:448px" width="14" height="14" viewBox="0 0 14 14"><path d="M7 .5v13M.5 7h13" stroke="#c6c8dc" stroke-width="2" fill="none"/></svg>
<!-- export -->
<div class="abs" style="left:1441px;top:439px;width:147px;height:30px;border-radius:15px;background:#109aff"></div>
<div class="abs" style="left:1483px;top:444px;font-size:14px;line-height:20px;color:#fff;letter-spacing:-.45px;-webkit-text-stroke:.25px #fff">Export</div>
<div class="abs" style="left:1559.500px;top:443px;width:1.500px;height:22px;background:#7cc6ff"></div>
<svg class="abs" style="left:1568px;top:450px" width="10" height="8" viewBox="0 0 10 8"><path d="M1.200 1.500L5 5.800 8.800 1.500" fill="none" stroke="#fff" stroke-width="2" stroke-linecap="round" stroke-linejoin="round"/></svg>
<!-- TIMELINE -->
<div class="tk" style="top:500px;height:50.500px;background:#1b1d26"></div>
<div class="tk" style="top:661px;height:213px;background:#1b1d26"></div>
<svg class="abs" style="left:0;top:0" width="1600" height="500" viewBox="0 0 1600 500"><path d="M63.6 490v10.500M84.6 493v7.500M105.6 493v7.500M126.6 493v7.500M147.7 493v7.500M168.7 490v10.500M189.7 493v7.500M210.7 493v7.500M231.7 493v7.500M252.7 493v7.500M273.8 490v10.500M294.8 493v7.500M315.8 493v7.500M336.8 493v7.500M357.8 493v7.500M378.8 490v10.500M399.9 493v7.500M420.9 493v7.500M441.9 493v7.500M462.9 493v7.500M483.9 490v10.500M504.9 493v7.500M526.0 493v7.500M547.0 493v7.500M568.0 493v7.500M589.0 490v10.500M610.0 493v7.500M631.0 493v7.500M652.0 493v7.500M673.1 493v7.500M694.1 490v10.500M715.1 493v7.500M736.1 493v7.500M757.1 493v7.500M778.1 493v7.500M799.2 490v10.500M820.2 493v7.500M841.2 493v7.500M862.2 493v7.500M883.2 493v7.500M904.2 490v10.500M925.3 493v7.500M946.3 493v7.500M967.3 493v7.500M988.3 493v7.500M1009.3 490v10.500M1030.3 493v7.500M1051.4 493v7.500M1072.4 493v7.500M1093.4 493v7.500M1114.4 490v10.500M1135.4 493v7.500M1156.4 493v7.500M1177.4 493v7.500M1198.5 493v7.500M1219.5 490v10.500M1240.5 493v7.500M1261.5 493v7.500M1282.5 493v7.500M1303.5 493v7.500M1324.6 490v10.500M1345.6 493v7.500M1366.6 493v7.500M1387.6 493v7.500M1408.6 493v7.500M1429.6 490v10.500M1450.7 493v7.500M1471.7 493v7.500M1492.7 493v7.500M1513.7 493v7.500" stroke="#414458" stroke-width="1" fill="none"/></svg>
<div class="rl" style="left:63.3px">00:00:00</div>
<div class="rl" style="left:168.4px">00:00:05</div>
<div class="rl" style="left:273.5px">00:00:10</div>
<div class="rl" style="left:378.5px">00:00:15</div>
<div class="rl" style="left:483.6px">00:00:20</div>
<div class="rl" style="left:588.7px">00:00:25</div>
<div class="rl" style="left:693.8px">00:00:30</div>
<div class="rl" style="left:798.9px">00:00:35</div>
<div class="rl" style="left:903.9px">00:00:40</div>
<div class="rl" style="left:1009.0px">00:00:45</div>
<div class="rl" style="left:1114.1px">00:00:50</div>
<div class="rl" style="left:1219.2px">00:00:55</div>
<div class="rl" style="left:1324.3px">00:01:00</div>
<div class="rl" style="left:1429.3px">00:01:05</div>
<div class="clip" style="left:65px;width:82px"><svg width="78" height="47" viewBox="0 0 78 47"><defs><linearGradient id="c1g" x1="0" y1="0" x2="1" y2="0"><stop offset="0" stop-color="#24a6f2"/><stop offset=".5" stop-color="#35b4fa"/><stop offset="1" stop-color="#1e9eee"/></linearGradient></defs><rect width="78" height="47" fill="url(#c1g)"/><path d="M21 47c0-8 0-14 2-18 2-3 5-4 8-5h6c3 1 6 2 8 5 2 4 2 10 1 18z" fill="#ecba1e"/><path d="M25 47l1-14M42 47l-1-13" stroke="#c89a14" stroke-width="1.200"/><ellipse cx="33.500" cy="13.500" rx="8.500" ry="8" fill="#241612"/><ellipse cx="33.500" cy="17.500" rx="3.800" ry="4.800" fill="#8c5a40"/><path d="M31 22h5v3h-5z" fill="#8c5a40"/></svg></div>
<div class="clip" style="left:149px;width:263px"><svg width="259" height="47" viewBox="0 0 259 47"><g><rect width="84.500" height="47" fill="#d4d4d0"/><path d="M0 0h50L24 18 0 24z" fill="#7eb0dc" filter="url(#b2)"/><path d="M34 2c14-4 30-2 50 4v22H20z" fill="#e9e8e4" filter="url(#b2)"/><path d="M30 28c14-4 34-4 54-1v8H30z" fill="#8a8c90" opacity=".6" filter="url(#b1)"/><path d="M0 32l30-2 55 4v13H0z" fill="#b9a566"/><path d="M0 40l84-2v9H0z" fill="#a8934f"/><path d="M20.5 47l1-11c0-4 3-6 7-7l6-1 7 1c4 1 7 3 7 7l1 11z" fill="#4c1a1e"/><path d="M35.0 12c4-1 8 2 8 7l3 14-5 6h-11l-5-6 3-14c0-5 3-7 7-7z" fill="#b4743a"/><ellipse cx="35.0" cy="20" rx="3.200" ry="4.500" fill="#ddb094"/><path d="M31.5 27h7l4 20h-15z" fill="#4c1a1e"/></g><g transform="translate(80.600 0)"><rect width="84.500" height="47" fill="#d6d6d2"/><path d="M0 12c20-2 50-4 84 2v10H0z" fill="#b0b2b4" filter="url(#b2)"/><path d="M20 20c16-5 40-5 64-1v6H20z" fill="#7c7e80" opacity=".7" filter="url(#b1)"/><path d="M0 23l40-2 45 2v24H0z" fill="#b7a364"/><path d="M0 30c20 2 50-4 84-2v4c-30 0-60 6-84 2z" fill="#9c8848" opacity=".7"/><path d="M0 38l84-3v12H0z" fill="#ab9752"/><path d="M19.5 47l1-11c0-4 3-6 7-7l6-1 7 1c4 1 7 3 7 7l1 11z" fill="#4c1a1e"/><path d="M34.0 12c4-1 8 2 8 7l3 14-5 6h-11l-5-6 3-14c0-5 3-7 7-7z" fill="#b4743a"/><ellipse cx="34.0" cy="20" rx="3.200" ry="4.500" fill="#ddb094"/><path d="M30.5 27h7l4 20h-15z" fill="#4c1a1e"/></g><g transform="translate(165 0)"><rect width="84.500" height="47" fill="#d0d0cc"/><path d="M30 8c14-4 34-4 54 0v6H30z" fill="#6c6e70" opacity=".8" filter="url(#b1)"/><path d="M0 13l40-2 45 3v33H0z" fill="#b29e5e"/><path d="M40 20c14 0 30 2 44 6v6c-14-4-30-6-44-6z" fill="#8c7a3e" opacity=".7"/><path d="M0 36l84-2v13H0z" fill="#a8944e"/><path d="M19.5 47l1-11c0-4 3-6 7-7l6-1 7 1c4 1 7 3 7 7l1 11z" fill="#4c1a1e"/><path d="M34.0 12c4-1 8 2 8 7l3 14-5 6h-11l-5-6 3-14c0-5 3-7 7-7z" fill="#b4743a"/><ellipse cx="34.0" cy="20" rx="3.200" ry="4.500" fill="#ddb094"/><path d="M30.5 27h7l4 20h-15z" fill="#4c1a1e"/></g><rect x="249" width="10" height="47" fill="#b29e5e"/><rect x="249" width="10" height="12" fill="#d0d0cc"/></svg></div>
<div class="abs" style="left:149px;top:613.500px;width:263px;height:37px;border-radius:3px 3px 6px 6px;background:#4b5cba"></div>
<div class="clip" style="left:415px;width:81px"><svg width="77" height="47" viewBox="0 0 77 47"><defs><radialGradient id="c3g" cx="40%" cy="55%" r="75%"><stop offset="0" stop-color="#ffc030"/><stop offset=".5" stop-color="#f08810"/><stop offset="1" stop-color="#a83804"/></radialGradient></defs><rect width="77" height="47" fill="url(#c3g)"/><path d="M4 47c1-12 3-24 5-38" stroke="#ffd040" stroke-width="4" fill="none" filter="url(#b1)"/><path d="M10 14c0-10 10-16 20-15s18 8 17 18-6 16-10 18l-16 0c-6-4-11-12-11-21z" fill="#7c2406" filter="url(#b1)"/><path d="M20 6c6-4 16-4 22 2" stroke="#d8600c" stroke-width="3" fill="none" filter="url(#b1)"/><ellipse cx="28" cy="21" rx="6.500" ry="8" fill="#c07840"/><path d="M24 18c2-3 8-3 10 0" stroke="#5c1c08" stroke-width="1.500" fill="none"/><path d="M12 47l2-10 8-6 6-1 8 2 8 6 3 9z" fill="#f6cc2c"/><path d="M12 47l3-12 6-4-2 16zM47 47l-4-12-4-3 1 15z" fill="#a4cce0"/><rect x="51" width="26" height="47" fill="#f09010"/><path d="M51 0h5v47h-5z" fill="#a83c08" opacity=".6"/><path d="M60 0c8 10 10 30 6 47h11V0z" fill="#d85c0c"/><path d="M60 47c4-12 5-26 3-38" stroke="#ffdc50" stroke-width="4" fill="none" filter="url(#b05)"/><path d="M69 47l2-14 6-4v18z" fill="#a4cce0"/><path d="M66 30l6-4 5 2v6z" fill="#f6cc2c"/></svg></div>
<div class="clip" style="left:498px;width:425px"><svg width="421" height="47" viewBox="0 0 421 47" font-family="'Liberation Sans',sans-serif" font-weight="bold"><rect width="81" height="47" fill="#a8b4c0"/><path d="M0 0h30v22H0z" fill="#b0988c"/><path d="M30 4h51v18H30z" fill="#8c9884"/><path d="M50 0h31v14H50z" fill="#c8d0d8"/><rect y="24" width="81" height="23" fill="#b44a44"/><path d="M0 40h81" stroke="#d8a8a0" stroke-width=".8"/><path d="M16 40l4-14 2-8h5l2 8 5 14h-3l-5-10-5 10zM38 42l4-16 2-10h6l2 10 5 16h-3l-6-12-6 12zM62 40l4-14 2-8h5l2 8 4 14h-3l-5-10-5 10z" fill="#2c2428"/><circle cx="24" cy="15" r="2.800" fill="#c89878"/><circle cx="47" cy="13" r="3" fill="#c89878"/><circle cx="70" cy="15" r="2.800" fill="#c89878"/><circle cx="30" cy="36" r="3" fill="#8a3c20"/><circle cx="48" cy="40" r="3.200" fill="#8a3c20"/><circle cx="66" cy="36" r="3" fill="#8a3c20"/><text x="1.500" y="25" font-size="6.200" fill="#fff" textLength="66" lengthAdjust="spacingAndGlyphs">AI BACKGROUND</text><text x="36" y="31.500" font-size="6.200" fill="#fff" textLength="41" lengthAdjust="spacingAndGlyphs">REMOVAL</text><g transform="translate(81 0)"><rect width="84" height="47" fill="#7caa6c"/><rect width="84" height="16" fill="#a8d4dc"/><path d="M0 14h84v8H0z" fill="#5c8c4c"/><path d="M0 22h84v25H0z" fill="#c8d4cc"/><path d="M4 22l3-8 3 8zM14 22l3-10 3 10zM58 22l3-9 3 9zM70 22l3-7 3 7z" fill="#eef4f4"/><path d="M22 47l4-12 8-4h12l10 4 6 12z" fill="#c8ccd0"/><ellipse cx="39" cy="22" rx="9" ry="12" fill="#c89474"/><path d="M30 26c2 8 6 12 10 12s8-4 9-12l-4 4h-10z" fill="#8c5838"/><path d="M29 16c0-8 6-12 12-11s9 4 9 9l4 2-6 1H30z" fill="#3c3c44"/><text x="2" y="38.500" font-size="6.200" fill="#fff" textLength="36" lengthAdjust="spacingAndGlyphs">AI NOISE</text><text x="15" y="45" font-size="6.200" fill="#fff" textLength="41" lengthAdjust="spacingAndGlyphs">REMOVAL</text><rect x="60" y="17" width="7" height="5" fill="#3858d8"/></g><g transform="translate(165 0)"><rect width="84" height="47" fill="#101116"/><rect x="36" y="0" width="20" height="6" fill="#c82838"/><rect x="59" y="0" width="18" height="6" fill="#4838a8"/><rect x="36" y="13" width="20" height="11" fill="#4a5060"/><rect x="59" y="13" width="20" height="11" fill="#3a2a8c"/><path d="M62 20c4-6 10-6 14 0" stroke="#e84868" stroke-width="2" fill="none"/><rect x="2" y="18" width="3.500" height="4" fill="#1a9cff"/><rect x="0" y="43" width="84" height="4" fill="#6c3cb8"/><path d="M8 35h70" stroke="#3a3c4c" stroke-width="1.500" stroke-dasharray="3 3"/></g><g transform="translate(249 0)"><defs><linearGradient id="c4d" x1="0" y1="0" x2="1" y2="1"><stop offset="0" stop-color="#3c7cc0"/><stop offset=".5" stop-color="#2090c8"/><stop offset="1" stop-color="#1c70a8"/></linearGradient></defs><rect width="84" height="47" fill="url(#c4d)"/><path d="M12 16c10-8 40-10 56-2l-4 14c-16 6-40 6-52-2z" fill="#48b8e0" opacity=".8" filter="url(#b1)"/><path d="M12 20c6-8 14-6 16 0s-4 12-16 8z" fill="#7058c0" opacity=".8" filter="url(#b1)"/><path d="M26 6l8-2 4 10-4 4zM36 22l14-4 6 4-8 6-12 2z" fill="#d8ecf4"/><path d="M30 28l12-6 8 2-6 6z" fill="#1c4c8c"/><rect x="4" y="36" width="38" height="5" fill="#c8404c"/><rect x="44" y="36" width="36" height="5" fill="#2c8ca8"/><rect x="4" y="42.500" width="76" height="2" fill="#a8d0e8"/><rect x="0" y="0" width="2.500" height="47" fill="#e8f0f8"/><text x="66" y="29" font-size="6.200" fill="#fff" textLength="13" lengthAdjust="spacingAndGlyphs">LIT</text><text x="31" y="35.500" font-size="6.200" fill="#fff" textLength="46" lengthAdjust="spacingAndGlyphs">OVERLAYS</text></g><g transform="translate(333 0)"><rect width="88" height="47" fill="#b8e0f4"/><path d="M0 0h12v47H0z" fill="#a4d4ee"/><rect x="9" y="8" width="75" height="39" rx="1.500" fill="#15161b"/><rect x="12" y="10.500" width="10" height="2.500" fill="#3a3c48"/><rect x="26" y="10.500" width="11" height="2.500" fill="#3a3c48"/><path d="M58 30l3 5-2-.5z" fill="#d0d0d8"/><rect x="84" width="4" height="47" fill="#eef4fa"/></g></svg></div>
<div class="abs" style="left:498px;top:613.500px;width:425px;height:37px;border-radius:3px 3px 6px 6px;background:#4b5cba;overflow:hidden"><svg width="425" height="37" viewBox="498 613.500 425 37"><path d="M498.0 650.5L498.0 631.6L499.1 638.3L500.2 633.8L501.3 629.7L502.4 630.0L503.5 641.4L504.6 641.2L505.7 641.7L506.8 638.3L507.9 639.4L509.0 626.5L510.1 637.9L511.2 641.4L512.3 632.2L513.4 641.4L514.5 636.7L515.6 641.4L516.7 636.3L517.8 629.1L518.9 641.4L520.0 638.5L521.1 639.8L522.2 640.6L523.3 640.0L524.4 632.7L525.5 640.4L526.6 641.4L527.7 638.9L528.8 638.0L529.9 639.9L531.0 638.2L532.1 636.8L533.2 637.0L534.3 633.1L535.4 633.3L536.5 637.2L537.6 641.4L538.7 639.2L539.8 637.2L540.9 633.9L542.0 630.4L543.1 638.0L544.2 641.5L545.3 642.5L546.4 642.3L547.5 637.9L548.6 639.1L549.7 629.6L550.8 641.3L551.9 638.3L553.0 640.1L554.1 629.6L555.2 635.7L556.3 632.0L557.4 635.3L558.5 637.2L559.6 638.4L560.7 635.0L561.8 637.5L562.9 636.5L564.0 637.7L565.1 637.5L566.2 642.7L567.3 637.0L568.4 636.9L569.5 637.2L570.6 639.6L571.7 635.1L572.8 638.9L573.9 632.9L575.0 638.6L576.1 638.9L577.2 638.0L578.3 634.7L579.4 636.4L580.5 639.1L581.6 640.7L582.7 635.8L583.8 641.4L584.9 639.5L586.0 637.8L587.1 640.1L588.2 640.9L589.3 642.1L590.4 640.8L591.5 631.3L592.6 636.2L593.7 635.1L594.8 631.0L595.9 640.4L597.0 639.4L598.1 630.7L599.2 635.4L600.3 636.5L601.4 639.0L602.5 642.0L603.6 634.8L604.7 637.2L605.8 630.1L606.9 637.0L608.0 639.6L609.1 631.8L610.2 636.8L611.3 629.5L612.4 632.7L613.5 640.2L614.6 642.0L615.7 638.3L616.8 637.7L617.9 639.4L619.0 634.3L620.1 639.6L621.2 636.2L622.3 639.4L623.4 635.2L624.5 639.3L625.6 639.2L626.7 638.4L627.8 640.3L628.9 639.5L630.0 639.3L631.1 639.4L632.2 638.5L633.3 630.3L634.4 639.3L635.5 629.6L636.6 634.4L637.7 638.1L638.8 640.4L639.9 640.5L641.0 627.3L642.1 631.5L643.2 638.1L644.3 636.3L645.4 633.3L646.5 616.7L647.6 638.1L648.7 625.6L649.8 632.6L650.9 635.4L652.0 633.7L653.1 632.0L654.2 638.1L655.3 630.0L656.4 630.3L657.5 619.6L658.6 620.0L659.7 618.5L660.8 624.8L661.9 633.3L663.0 634.0L664.1 630.4L665.2 629.3L666.3 629.8L667.4 628.0L668.5 627.7L669.6 629.3L670.7 633.7L671.8 634.0L672.9 630.7L674.0 622.0L675.1 632.1L676.2 627.0L677.3 631.8L678.4 624.7L679.5 629.7L680.6 630.2L681.7 630.7L682.8 638.1L683.9 632.7L685.0 638.1L686.1 638.1L687.2 631.7L688.3 631.9L689.4 628.4L690.5 627.1L691.6 629.5L692.7 633.9L693.8 632.8L694.9 634.1L696.0 631.5L697.1 626.4L698.2 622.2L699.3 634.8L700.4 634.8L701.5 636.3L702.6 630.7L703.7 636.1L704.8 636.8L705.9 637.9L707.0 635.0L708.1 637.2L709.2 639.5L710.3 634.6L711.4 637.0L712.5 634.5L713.6 633.3L714.7 628.4L715.8 630.6L716.9 636.6L718.0 630.6L719.1 639.5L720.2 636.2L721.3 639.6L722.4 639.5L723.5 623.2L724.6 629.4L725.7 623.8L726.8 637.3L727.9 637.4L729.0 627.5L730.1 636.3L731.2 634.1L732.3 637.0L733.4 634.5L734.5 638.3L735.6 639.5L736.7 639.5L737.8 626.4L738.9 627.6L740.0 633.7L741.1 631.1L742.2 630.9L743.3 620.3L744.4 616.6L745.5 629.1L746.6 628.0L747.7 614.7L748.8 632.8L749.9 627.1L751.0 634.3L752.1 638.1L753.2 627.2L754.3 634.9L755.4 632.6L756.5 636.3L757.6 633.8L758.7 633.3L759.8 624.7L760.9 632.8L762.0 618.1L763.1 636.0L764.2 633.8L765.3 639.8L766.4 635.4L767.5 638.6L768.6 622.5L769.7 633.5L770.8 627.2L771.9 626.9L773.0 638.1L774.1 621.5L775.2 623.8L776.3 626.0L777.4 633.4L778.5 633.9L779.6 635.1L780.7 634.3L781.8 635.1L782.9 631.5L784.0 635.3L785.1 634.9L786.2 626.1L787.3 637.1L788.4 636.8L789.5 634.9L790.6 635.1L791.7 624.8L792.8 636.7L793.9 634.3L795.0 621.4L796.1 638.5L797.2 638.1L798.3 636.7L799.4 624.2L800.5 639.5L801.6 623.4L802.7 639.5L803.8 638.3L804.9 638.9L806.0 635.8L807.1 626.3L808.2 638.2L809.3 635.1L810.4 635.3L811.5 635.3L812.6 638.2L813.7 628.1L814.8 629.8L815.9 635.3L817.0 620.6L818.1 634.3L819.2 629.1L820.3 632.5L821.4 639.5L822.5 625.0L823.6 628.0L824.7 639.5L825.8 636.3L826.9 636.0L828.0 637.5L829.1 639.5L830.2 625.7L831.3 636.7L832.4 626.9L833.5 627.7L834.6 626.5L835.7 628.5L836.8 624.1L837.9 634.6L839.0 637.9L840.1 635.0L841.2 635.0L842.3 637.6L843.4 619.0L844.5 634.5L845.6 624.5L846.7 628.5L847.8 638.8L848.9 636.4L850.0 626.4L851.1 638.8L852.2 635.4L853.3 625.6L854.4 620.1L855.5 636.5L856.6 618.6L857.7 637.9L858.8 638.8L859.9 620.5L861.0 638.1L862.1 638.8L863.2 636.7L864.3 638.1L865.4 634.3L866.5 633.4L867.6 623.3L868.7 638.8L869.8 635.6L870.9 637.7L872.0 628.7L873.1 634.8L874.2 636.3L875.3 638.8L876.4 634.3L877.5 634.6L878.6 633.7L879.7 632.7L880.8 634.4L881.9 633.9L883.0 637.2L884.1 625.2L885.2 637.0L886.3 636.0L887.4 636.9L888.5 635.4L889.6 640.2L890.7 638.2L891.8 627.6L892.9 635.7L894.0 640.1L895.1 637.5L896.2 640.1L897.3 639.3L898.4 625.2L899.5 639.6L900.6 640.1L901.7 631.0L902.8 640.1L903.9 637.7L905.0 640.6L906.1 625.5L907.2 640.8L908.3 640.4L909.4 638.8L910.5 640.1L911.6 640.1L912.7 627.4L913.8 636.9L914.9 630.6L916.0 637.9L917.1 638.5L918.2 638.1L919.3 630.7L920.4 638.5L921.5 640.1L922.6 638.6L923.0 650.5Z" fill="#a2abf2"/></svg></div>
<div class="clip" style="left:926px;width:81px"><svg width="77" height="47" viewBox="0 0 77 47"><rect width="77" height="47" fill="#0a68c8"/><rect y="39" width="77" height="8" fill="#c0c0bc"/><rect y="32" width="77" height=".8" fill="#0a2a86"/><g fill="#7ca0b4" opacity=".75"><path d="M6 38l2-12 6-4 4 6-2 10zM16 38l3-14 6-4 4 8-3 10zM42 38l2-14 8-4 4 8-4 10zM54 38l3-12 6-4 4 6-3 10zM64 38l2-11 5-3 4 5-3 9z"/></g><path d="M30 24l2-8 6-2 8 2 6 2-1 2-8-1-2 8z" fill="#f5c518"/><ellipse cx="38" cy="14.500" rx="3.400" ry="3.600" fill="#4a2018"/><path d="M32 25l8-1 2 8-2 4h-2l-1-7-3 1-1 6h-3z" fill="#15171f"/><path d="M27 36l16-3" stroke="#9c7a50" stroke-width="1.400"/></svg></div>
<div class="abs" style="left:65px;top:669px;width:431.500px;height:37.500px;border-radius:6px;background:#138a80;overflow:hidden"><svg width="432" height="38" viewBox="65 669 432 38"><path d="M65.0 706.5L65.0 698.7L66.1 692.7L67.2 699.2L68.3 700.1L69.4 699.4L70.5 693.1L71.6 700.6L72.7 700.6L73.8 699.7L74.9 694.6L76.0 699.3L77.1 695.5L78.2 692.2L79.3 697.9L80.4 699.3L81.5 692.2L82.6 698.5L83.7 697.0L84.8 700.0L85.9 698.4L87.0 697.7L88.1 698.1L89.2 699.6L90.3 698.6L91.4 700.6L92.5 697.4L93.6 691.8L94.7 694.0L95.8 697.8L96.9 697.1L98.0 694.5L99.1 699.5L100.2 698.8L101.3 691.6L102.4 698.9L103.5 696.0L104.6 692.3L105.7 698.8L106.8 698.7L107.9 700.6L109.0 700.6L110.1 695.6L111.2 694.0L112.3 701.3L113.4 700.5L114.5 699.5L115.6 700.3L116.7 700.9L117.8 699.7L118.9 694.7L120.0 701.4L121.1 700.0L122.2 701.0L123.3 701.6L124.4 699.7L125.5 697.1L126.6 693.7L127.7 700.0L128.8 693.6L129.9 697.1L131.0 694.8L132.1 701.3L133.2 700.7L134.3 700.9L135.4 701.2L136.5 696.1L137.6 701.2L138.7 701.3L139.8 700.6L140.9 699.5L142.0 695.1L143.1 696.4L144.2 693.6L145.3 700.5L146.4 701.0L147.5 694.9L148.6 695.0L149.7 701.1L150.8 696.6L151.9 699.8L153.0 701.1L154.1 696.1L155.2 700.3L156.3 701.1L157.4 701.3L158.5 699.6L159.6 701.3L160.7 700.3L161.8 701.3L162.9 696.4L164.0 695.8L165.1 702.6L166.2 694.3L167.3 701.3L168.4 694.8L169.5 701.3L170.6 699.9L171.7 699.4L172.8 700.7L173.9 701.3L175.0 700.5L176.1 701.3L177.2 701.2L178.3 701.3L179.4 700.3L180.5 700.4L181.6 700.6L182.7 701.9L183.8 702.1L184.9 695.5L186.0 700.5L187.1 699.8L188.2 699.3L189.3 698.2L190.4 699.8L191.5 699.6L192.6 697.9L193.7 695.9L194.8 702.0L195.9 699.8L197.0 699.3L198.1 699.7L199.2 699.7L200.3 699.5L201.4 700.1L202.5 700.5L203.6 699.6L204.7 700.5L205.8 700.9L206.9 696.6L208.0 694.5L209.1 702.0L210.2 700.0L211.3 700.4L212.4 699.0L213.5 696.9L214.6 700.4L215.7 695.8L216.8 695.6L217.9 695.1L219.0 700.7L220.1 700.0L221.2 700.9L222.3 700.8L223.4 700.6L224.5 701.1L225.6 702.1L226.7 696.3L227.8 701.1L228.9 697.4L230.0 701.0L231.1 700.9L232.2 701.3L233.3 702.0L234.4 701.6L235.5 701.8L236.6 700.6L237.7 702.0L238.8 702.2L239.9 702.0L241.0 702.5L242.1 702.1L243.2 702.3L244.3 702.2L245.4 700.8L246.5 702.2L247.6 700.7L248.7 702.0L249.8 700.4L250.9 702.6L252.0 700.4L253.1 701.5L254.2 700.5L255.3 701.4L256.4 697.5L257.5 702.6L258.6 701.3L259.7 700.6L260.8 700.9L261.9 701.4L263.0 701.5L264.1 700.7L265.2 702.5L266.3 701.6L267.4 701.3L268.5 701.3L269.6 697.8L270.7 699.1L271.8 699.7L272.9 702.2L274.0 702.6L275.1 702.6L276.2 702.4L277.3 699.3L278.4 698.6L279.5 701.6L280.6 701.5L281.7 702.0L282.8 703.6L283.9 701.1L285.0 702.6L286.1 702.3L287.2 701.0L288.3 698.6L289.4 702.4L290.5 702.0L291.6 702.0L292.7 702.1L293.8 703.0L294.9 702.8L296.0 702.5L297.1 699.1L298.2 701.0L299.3 702.7L300.4 692.8L301.5 699.8L302.6 700.9L303.7 702.0L304.8 698.9L305.9 699.1L307.0 692.3L308.1 699.6L309.2 700.4L310.3 697.5L311.4 701.1L312.5 691.8L313.6 700.2L314.7 700.5L315.8 700.7L316.9 702.0L318.0 700.3L319.1 700.3L320.2 700.6L321.3 701.2L322.4 700.9L323.5 699.9L324.6 699.6L325.7 699.4L326.8 696.7L327.9 698.7L329.0 696.7L330.1 697.4L331.2 694.3L332.3 698.6L333.4 697.9L334.5 697.0L335.6 695.9L336.7 697.1L337.8 697.5L338.9 698.4L340.0 698.2L341.1 695.8L342.2 696.7L343.3 697.6L344.4 697.2L345.5 695.8L346.6 695.8L347.7 698.5L348.8 700.6L349.9 696.1L351.0 696.5L352.1 696.2L353.2 698.7L354.3 697.4L355.4 696.7L356.5 698.6L357.6 699.3L358.7 699.1L359.8 697.9L360.9 698.6L362.0 697.6L363.1 699.6L364.2 700.4L365.3 691.4L366.4 699.0L367.5 698.5L368.6 699.6L369.7 691.1L370.8 699.1L371.9 697.2L373.0 695.0L374.1 700.6L375.2 690.9L376.3 694.8L377.4 695.5L378.5 698.0L379.6 693.8L380.7 695.5L381.8 690.8L382.9 698.8L384.0 699.7L385.1 699.8L386.2 697.9L387.3 700.6L388.4 691.1L389.5 697.0L390.6 698.3L391.7 698.3L392.8 698.7L393.9 698.1L395.0 698.0L396.1 697.9L397.2 694.9L398.3 698.8L399.4 699.5L400.5 684.4L401.6 679.5L402.7 678.1L403.8 680.9L404.9 678.8L406.0 685.0L407.1 682.2L408.2 684.5L409.3 679.3L410.4 686.8L411.5 675.6L412.6 678.3L413.7 686.1L414.8 680.6L415.9 679.1L417.0 684.6L418.1 684.2L419.2 681.8L420.3 686.4L421.4 686.2L422.5 688.4L423.6 680.2L424.7 685.9L425.8 692.9L426.9 680.9L428.0 684.3L429.1 690.1L430.2 690.8L431.3 688.5L432.4 687.4L433.5 685.2L434.6 680.4L435.7 692.9L436.8 677.0L437.9 682.2L439.0 686.9L440.1 682.4L441.2 684.8L442.3 692.9L443.4 686.7L444.5 683.3L445.6 687.4L446.7 692.9L447.8 685.1L448.9 692.9L450.0 685.2L451.1 682.3L452.2 679.8L453.3 681.7L454.4 677.8L455.5 688.9L456.6 686.0L457.7 687.6L458.8 682.7L459.9 685.2L461.0 681.4L462.1 692.9L463.2 687.3L464.3 681.3L465.4 687.1L466.5 679.0L467.6 685.8L468.7 687.1L469.8 679.5L470.9 686.8L472.0 678.5L473.1 686.1L474.2 691.5L475.3 685.3L476.4 691.5L477.5 678.0L478.6 686.4L479.7 689.3L480.8 674.1L481.9 677.8L483.0 672.1L484.1 691.5L485.2 685.1L486.3 678.7L487.4 691.5L488.5 687.6L489.6 689.1L490.7 685.0L491.8 672.2L492.9 681.8L494.0 684.3L495.1 677.8L496.2 673.9L497.0 706.5Z" fill="#8ee0d6"/></svg></div>
<div class="abs" style="left:75.500px;top:679.500px;font-size:13px;line-height:18px;color:#fff;letter-spacing:-.12px;white-space:nowrap">Atmosphere_Chill_Beat.mp3</div>
<div class="abs" style="left:925.500px;top:669px;width:403.500px;height:37.500px;border-radius:6px;background:#17a496;overflow:hidden"><svg width="404" height="38" viewBox="925.500 669 404 38"><path d="M925.5 706.5L925.5 682.1L926.6 682.8L927.7 688.8L928.8 688.3L929.9 686.7L931.0 694.1L932.1 686.8L933.2 685.0L934.3 694.1L935.4 687.5L936.5 684.3L937.6 687.9L938.7 687.9L939.8 694.1L940.9 679.0L942.0 694.1L943.1 693.6L944.2 693.5L945.3 691.9L946.4 689.9L947.5 692.6L948.6 683.7L949.7 691.8L950.8 689.3L951.9 694.1L953.0 680.2L954.1 691.5L955.2 687.9L956.3 681.7L957.4 694.3L958.5 693.3L959.6 680.5L960.7 676.4L961.8 678.2L962.9 694.1L964.0 689.8L965.1 683.5L966.2 688.4L967.3 694.1L968.4 675.5L969.5 694.1L970.6 686.7L971.7 676.6L972.8 675.2L973.9 678.3L975.0 692.5L976.1 690.8L977.2 693.9L978.3 694.6L979.4 691.3L980.5 692.1L981.6 696.3L982.7 695.3L983.8 695.6L984.9 682.6L986.0 681.5L987.1 691.8L988.2 683.7L989.3 691.8L990.4 683.5L991.5 693.8L992.6 682.0L993.7 688.0L994.8 675.7L995.9 694.1L997.0 692.3L998.1 693.4L999.2 693.3L1000.3 693.1L1001.4 678.9L1002.5 674.2L1003.6 692.1L1004.7 687.8L1005.8 691.7L1006.9 691.7L1008.0 691.0L1009.1 688.0L1010.2 675.6L1011.3 682.4L1012.4 681.4L1013.5 693.5L1014.6 677.9L1015.7 688.5L1016.8 690.8L1017.9 683.7L1019.0 692.9L1020.1 688.5L1021.2 691.6L1022.3 694.1L1023.4 689.8L1024.5 694.1L1025.6 692.7L1026.7 689.3L1027.8 689.5L1028.9 692.8L1030.0 692.4L1031.1 692.1L1032.2 677.8L1033.3 694.6L1034.4 694.9L1035.5 683.7L1036.6 694.7L1037.7 689.5L1038.8 682.9L1039.9 693.3L1041.0 679.2L1042.1 689.8L1043.2 673.5L1044.3 681.1L1045.4 674.5L1046.5 686.0L1047.6 689.7L1048.7 688.5L1049.8 685.0L1050.9 690.6L1052.0 683.6L1053.1 679.8L1054.2 689.2L1055.3 691.3L1056.4 688.1L1057.5 686.9L1058.6 688.4L1059.7 688.9L1060.8 690.7L1061.9 682.6L1063.0 692.7L1064.1 690.5L1065.2 693.6L1066.3 680.9L1067.4 694.1L1068.5 676.8L1069.6 692.0L1070.7 674.6L1071.8 691.5L1072.9 692.8L1074.0 694.1L1075.1 673.4L1076.2 694.1L1077.3 695.5L1078.4 691.3L1079.5 690.2L1080.6 675.4L1081.7 680.9L1082.8 674.3L1083.9 696.7L1085.0 683.5L1086.1 691.6L1087.2 694.1L1088.3 691.0L1089.4 693.3L1090.5 692.8L1091.6 676.5L1092.7 683.2L1093.8 686.8L1094.9 688.6L1096.0 692.0L1097.1 687.6L1098.2 689.7L1099.3 694.1L1100.4 679.4L1101.5 683.0L1102.6 687.2L1103.7 688.5L1104.8 688.5L1105.9 694.1L1107.0 688.0L1108.1 677.1L1109.2 687.8L1110.3 681.3L1111.4 691.7L1112.5 688.1L1113.6 690.3L1114.7 683.3L1115.8 688.1L1116.9 692.6L1118.0 683.0L1119.1 672.6L1120.2 676.1L1121.3 678.2L1122.4 683.6L1123.5 685.3L1124.6 684.9L1125.7 680.8L1126.8 685.2L1127.9 689.0L1129.0 687.0L1130.1 688.1L1131.2 689.2L1132.3 690.0L1133.4 689.0L1134.5 686.8L1135.6 688.1L1136.7 685.5L1137.8 685.6L1138.9 689.1L1140.0 694.1L1141.1 682.9L1142.2 678.0L1143.3 681.1L1144.4 687.3L1145.5 691.8L1146.6 682.0L1147.7 682.0L1148.8 685.6L1149.9 683.7L1151.0 676.8L1152.1 684.4L1153.2 684.7L1154.3 687.2L1155.4 683.7L1156.5 683.6L1157.6 682.7L1158.7 681.8L1159.8 687.1L1160.9 689.6L1162.0 675.3L1163.1 683.7L1164.2 688.5L1165.3 686.4L1166.4 694.1L1167.5 687.3L1168.6 694.1L1169.7 673.3L1170.8 689.5L1171.9 684.8L1173.0 686.3L1174.1 679.1L1175.2 688.7L1176.3 690.5L1177.4 691.1L1178.5 692.0L1179.6 690.2L1180.7 679.8L1181.8 690.4L1182.9 684.9L1184.0 692.9L1185.1 685.8L1186.2 676.7L1187.3 694.9L1188.4 691.4L1189.5 692.7L1190.6 697.2L1191.7 694.7L1192.8 694.2L1193.9 683.2L1195.0 692.4L1196.1 692.8L1197.2 693.4L1198.3 693.8L1199.4 697.2L1200.5 695.7L1201.6 695.7L1202.7 695.5L1203.8 697.1L1204.9 696.7L1206.0 683.4L1207.1 697.9L1208.2 685.8L1209.3 697.5L1210.4 697.7L1211.5 699.5L1212.6 698.9L1213.7 697.5L1214.8 696.9L1215.9 690.0L1217.0 689.2L1218.1 698.6L1219.2 698.7L1220.3 696.1L1221.4 690.2L1222.5 697.4L1223.6 697.3L1224.7 698.5L1225.8 696.0L1226.9 699.0L1228.0 687.0L1229.1 698.7L1230.2 700.2L1231.3 699.0L1232.4 692.6L1233.5 692.5L1234.6 697.6L1235.7 697.1L1236.8 693.0L1237.9 697.3L1239.0 698.3L1240.1 692.0L1241.2 699.8L1242.3 699.2L1243.4 693.9L1244.5 697.1L1245.6 699.2L1246.7 697.1L1247.8 700.3L1248.9 692.0L1250.0 697.8L1251.1 700.6L1252.2 692.6L1253.3 697.1L1254.4 696.0L1255.5 699.2L1256.6 697.2L1257.7 698.9L1258.8 698.7L1259.9 698.3L1261.0 701.4L1262.1 699.2L1263.2 699.8L1264.3 701.6L1265.4 698.4L1266.5 695.6L1267.6 697.5L1268.7 699.9L1269.8 696.4L1270.9 701.0L1272.0 700.3L1273.1 695.1L1274.2 700.0L1275.3 701.0L1276.4 697.0L1277.5 701.1L1278.6 700.4L1279.7 701.2L1280.8 697.6L1281.9 698.5L1283.0 702.2L1284.1 699.5L1285.2 702.1L1286.3 697.9L1287.4 702.5L1288.5 703.5L1289.6 702.0L1290.7 702.5L1291.8 700.1L1292.9 703.3L1294.0 703.2L1295.1 702.7L1296.2 702.8L1297.3 703.6L1298.4 703.4L1299.5 703.1L1300.6 703.9L1301.7 703.4L1302.8 703.9L1303.9 704.1L1305.0 704.1L1306.1 704.9L1307.2 704.3L1308.3 703.9L1309.4 704.6L1310.5 705.2L1311.6 705.3L1312.7 705.0L1313.8 705.5L1314.9 705.3L1316.0 705.7L1317.1 705.0L1318.2 705.8L1319.3 705.9L1320.4 706.1L1321.5 706.0L1322.6 706.0L1323.7 706.2L1324.8 706.2L1325.9 706.2L1327.0 706.2L1328.1 706.2L1329.0 706.5Z" fill="#8ee0d6"/></svg></div>
<div class="abs" style="left:936px;top:679.500px;font-size:13px;line-height:18px;color:#fff;opacity:.78;letter-spacing:-.12px;white-space:nowrap">Atmosphere_Chill_Beat.mp3</div>
<div class="abs" style="left:946px;top:490px;width:1.400px;height:378px;background:#e96a66"></div>
<svg class="abs" style="left:939px;top:474px" width="15" height="21" viewBox="0 0 15 21"><path d="M3.500 1.500h8c1.200 0 2 .8 2 2v10.500l-6 5.500-6-5.500V3.500c0-1.200.8-2 2-2z" fill="#f45c5c" stroke="#131419" stroke-width="1.400"/></svg>
<div class="abs" style="left:59px;top:867.500px;width:1204px;height:6.500px;border-radius:3.500px;background:#40435a"></div>
<div class="abs" style="left:11.500px;top:880px;font-size:13px;line-height:18px;color:#c6c8dc;letter-spacing:-.42px;-webkit-text-stroke:.32px currentColor;white-space:nowrap">Project length: 01:00</div>
<!-- TRACK HEADS -->
<svg class="abs" style="left:18px;top:478px" width="22" height="16" viewBox="0 0 22 16"><path d="M.5 2h13M.5 6.500h13M.5 11h7.500" stroke="#c6c8dc" stroke-width="2"/><path d="M16.200 5.500v9.500M11.500 10.200h9.500" stroke="#c6c8dc" stroke-width="2"/></svg>
<svg class="abs" style="left:5px;top:516px" width="15" height="18" viewBox="0 0 15 18"><path d="M.5 1h14M7.500 1v17" stroke="#3b3e50" stroke-width="1.400" fill="none"/></svg>
<svg class="abs" style="left:29.700px;top:511.9px" width="13.400" height="9.400" viewBox="0 0 13.400 9.400"><path d="M.2 4.700C1.800 1.700 4.100.2 6.700.2s4.900 1.500 6.500 4.500C11.600 7.700 9.300 9.200 6.700 9.200S1.800 7.700.2 4.700z" fill="#d0d2e4"/><circle cx="6.700" cy="4.700" r="2.500" fill="#d0d2e4" stroke="#1a1b22" stroke-width="1.300"/></svg>
<svg class="abs" style="left:29.100px;top:528.500px" width="14" height="10" viewBox="0 0 14 10"><path d="M4.500 1.200C2.400 1.200 1 2.900 1 5s1.400 3.800 3.500 3.800M9.500 1.200c2.100 0 3.500 1.700 3.500 3.800s-1.400 3.800-3.500 3.800M4.600 5h4.800" fill="none" stroke="#c6c8dc" stroke-width="1.800" stroke-linecap="round"/></svg>
<svg class="abs" style="left:29.700px;top:583.9px" width="13.400" height="9.400" viewBox="0 0 13.400 9.400"><path d="M.2 4.700C1.800 1.700 4.100.2 6.700.2s4.900 1.500 6.500 4.500C11.600 7.700 9.300 9.200 6.700 9.200S1.800 7.700.2 4.700z" fill="#d0d2e4"/><circle cx="6.700" cy="4.700" r="2.500" fill="#d0d2e4" stroke="#1a1b22" stroke-width="1.300"/></svg>
<svg class="abs" style="left:5px;top:596.500px" width="15" height="17" viewBox="0 0 15 17"><rect x="4.200" y=".5" width="6.600" height="7" fill="#3b3e50"/><rect x="4.200" y="9.500" width="6.600" height="7" fill="#3b3e50"/><path d="M1.200 0v17M13.800 0v17" stroke="#3b3e50" stroke-width="2.400" stroke-dasharray="3.200 2.600"/></svg>
<svg class="abs" style="left:29.100px;top:599.5px" width="14" height="13" viewBox="0 0 14 13"><path d="M.5 4.200h2.800L7.500.6v11.800L3.300 8.800H.5z" fill="#c6c8dc"/><path d="M9.500 1.500c2.600 1 3.800 2.800 3.800 5s-1.200 4-3.800 5" fill="none" stroke="#c6c8dc" stroke-width="2.200"/></svg>
<svg class="abs" style="left:29.100px;top:617px" width="14" height="11" viewBox="0 0 14 11"><path d="M5.800 1L1.500 5.500 5.800 10M1.800 5.500h11.700" fill="none" stroke="#c6c8dc" stroke-width="1.800" stroke-linecap="round" stroke-linejoin="round"/></svg>
<svg class="abs" style="left:4px;top:679px" width="16" height="18" viewBox="0 0 16 18"><path d="M4.800 14.500V3.800L14 1.500v10.800" fill="none" stroke="#3b3e50" stroke-width="1.600" stroke-linejoin="round"/><ellipse cx="3" cy="14.600" rx="2.600" ry="2.200" fill="#3b3e50"/><ellipse cx="12.200" cy="12.400" rx="2.600" ry="2.200" fill="#3b3e50"/></svg>
<svg class="abs" style="left:29.100px;top:672.5px" width="14" height="13" viewBox="0 0 14 13"><path d="M.5 4.200h2.800L7.500.6v11.800L3.300 8.800H.5z" fill="#c6c8dc"/><path d="M9.500 1.500c2.600 1 3.800 2.800 3.800 5s-1.200 4-3.800 5" fill="none" stroke="#c6c8dc" stroke-width="2.200"/></svg>
<svg class="abs" style="left:29.100px;top:690.500px" width="14" height="12" viewBox="0 0 14 12"><path d="M4.500 2.200C2.400 2.200 1 3.900 1 6s1.400 3.800 3.500 3.800M9.500 2.200c2.100 0 3.500 1.700 3.500 3.800s-1.400 3.800-3.500 3.800" fill="none" stroke="#c6c8dc" stroke-width="1.800" stroke-linecap="round"/><path d="M2.500 11L11.500 1" stroke="#c6c8dc" stroke-width="1.600" stroke-linecap="round"/></svg>
<!-- METER -->
<svg class="abs" style="left:0;top:0" width="1600" height="900" viewBox="0 0 1600 900"><g fill="#3b3e52"><rect x="1564.5" y="509.200" width="9" height="3" rx="1"/><rect x="1564.5" y="520.70" width="9" height="3" rx="1"/><rect x="1564.5" y="525.99" width="9" height="3" rx="1"/><rect x="1564.5" y="531.28" width="9" height="3" rx="1"/><rect x="1564.5" y="536.57" width="9" height="3" rx="1"/><rect x="1564.5" y="541.86" width="9" height="3" rx="1"/><rect x="1564.5" y="547.15" width="9" height="3" rx="1"/><rect x="1564.5" y="552.44" width="9" height="3" rx="1"/><rect x="1564.5" y="557.73" width="9" height="3" rx="1"/><rect x="1564.5" y="563.02" width="9" height="3" rx="1"/><rect x="1564.5" y="568.31" width="9" height="3" rx="1"/><rect x="1564.5" y="573.60" width="9" height="3" rx="1"/><rect x="1564.5" y="578.89" width="9" height="3" rx="1"/><rect x="1564.5" y="584.18" width="9" height="3" rx="1"/><rect x="1564.5" y="589.47" width="9" height="3" rx="1"/><rect x="1564.5" y="594.76" width="9" height="3" rx="1"/><rect x="1564.5" y="600.05" width="9" height="3" rx="1"/><rect x="1564.5" y="605.34" width="9" height="3" rx="1"/><rect x="1564.5" y="610.63" width="9" height="3" rx="1"/><rect x="1564.5" y="615.92" width="9" height="3" rx="1"/><rect x="1564.5" y="621.21" width="9" height="3" rx="1"/><rect x="1564.5" y="626.50" width="9" height="3" rx="1"/><rect x="1564.5" y="631.79" width="9" height="3" rx="1"/><rect x="1564.5" y="637.08" width="9" height="3" rx="1"/><rect x="1564.5" y="642.37" width="9" height="3" rx="1"/><rect x="1564.5" y="647.66" width="9" height="3" rx="1"/><rect x="1564.5" y="652.95" width="9" height="3" rx="1"/><rect x="1564.5" y="658.24" width="9" height="3" rx="1"/><rect x="1564.5" y="663.53" width="9" height="3" rx="1"/><rect x="1564.5" y="668.82" width="9" height="3" rx="1"/><rect x="1564.5" y="674.11" width="9" height="3" rx="1"/><rect x="1564.5" y="679.40" width="9" height="3" rx="1"/><rect x="1564.5" y="684.69" width="9" height="3" rx="1"/><rect x="1564.5" y="689.98" width="9" height="3" rx="1"/><rect x="1564.5" y="695.27" width="9" height="3" rx="1"/><rect x="1564.5" y="700.56" width="9" height="3" rx="1"/><rect x="1564.5" y="705.85" width="9" height="3" rx="1"/><rect x="1564.5" y="711.14" width="9" height="3" rx="1"/><rect x="1564.5" y="716.43" width="9" height="3" rx="1"/><rect x="1564.5" y="721.72" width="9" height="3" rx="1"/><rect x="1564.5" y="727.01" width="9" height="3" rx="1"/><rect x="1564.5" y="732.30" width="9" height="3" rx="1"/><rect x="1564.5" y="737.59" width="9" height="3" rx="1"/><rect x="1564.5" y="742.88" width="9" height="3" rx="1"/><rect x="1564.5" y="748.17" width="9" height="3" rx="1"/><rect x="1564.5" y="753.46" width="9" height="3" rx="1"/><rect x="1564.5" y="758.75" width="9" height="3" rx="1"/><rect x="1564.5" y="764.04" width="9" height="3" rx="1"/><rect x="1564.5" y="769.33" width="9" height="3" rx="1"/><rect x="1564.5" y="774.62" width="9" height="3" rx="1"/><rect x="1564.5" y="779.91" width="9" height="3" rx="1"/><rect x="1564.5" y="785.20" width="9" height="3" rx="1"/><rect x="1564.5" y="790.49" width="9" height="3" rx="1"/><rect x="1564.5" y="795.78" width="9" height="3" rx="1"/><rect x="1564.5" y="801.07" width="9" height="3" rx="1"/><rect x="1564.5" y="806.36" width="9" height="3" rx="1"/><rect x="1564.5" y="811.65" width="9" height="3" rx="1"/><rect x="1564.5" y="816.94" width="9" height="3" rx="1"/><rect x="1564.5" y="822.23" width="9" height="3" rx="1"/><rect x="1564.5" y="827.52" width="9" height="3" rx="1"/><rect x="1564.5" y="832.81" width="9" height="3" rx="1"/><rect x="1564.5" y="838.10" width="9" height="3" rx="1"/><rect x="1564.5" y="843.39" width="9" height="3" rx="1"/><rect x="1564.5" y="848.68" width="9" height="3" rx="1"/><rect x="1564.5" y="853.97" width="9" height="3" rx="1"/><rect x="1564.5" y="859.26" width="9" height="3" rx="1"/><rect x="1581.5" y="509.200" width="9" height="3" rx="1"/><rect x="1581.5" y="520.70" width="9" height="3" rx="1"/><rect x="1581.5" y="525.99" width="9" height="3" rx="1"/><rect x="1581.5" y="531.28" width="9" height="3" rx="1"/><rect x="1581.5" y="536.57" width="9" height="3" rx="1"/><rect x="1581.5" y="541.86" width="9" height="3" rx="1"/><rect x="1581.5" y="547.15" width="9" height="3" rx="1"/><rect x="1581.5" y="552.44" width="9" height="3" rx="1"/><rect x="1581.5" y="557.73" width="9" height="3" rx="1"/><rect x="1581.5" y="563.02" width="9" height="3" rx="1"/><rect x="1581.5" y="568.31" width="9" height="3" rx="1"/><rect x="1581.5" y="573.60" width="9" height="3" rx="1"/><rect x="1581.5" y="578.89" width="9" height="3" rx="1"/><rect x="1581.5" y="584.18" width="9" height="3" rx="1"/><rect x="1581.5" y="589.47" width="9" height="3" rx="1"/><rect x="1581.5" y="594.76" width="9" height="3" rx="1"/><rect x="1581.5" y="600.05" width="9" height="3" rx="1"/><rect x="1581.5" y="605.34" width="9" height="3" rx="1"/><rect x="1581.5" y="610.63" width="9" height="3" rx="1"/><rect x="1581.5" y="615.92" width="9" height="3" rx="1"/><rect x="1581.5" y="621.21" width="9" height="3" rx="1"/><rect x="1581.5" y="626.50" width="9" height="3" rx="1"/><rect x="1581.5" y="631.79" width="9" height="3" rx="1"/><rect x="1581.5" y="637.08" width="9" height="3" rx="1"/><rect x="1581.5" y="642.37" width="9" height="3" rx="1"/><rect x="1581.5" y="647.66" width="9" height="3" rx="1"/><rect x="1581.5" y="652.95" width="9" height="3" rx="1"/><rect x="1581.5" y="658.24" width="9" height="3" rx="1"/><rect x="1581.5" y="663.53" width="9" height="3" rx="1"/><rect x="1581.5" y="668.82" width="9" height="3" rx="1"/><rect x="1581.5" y="674.11" width="9" height="3" rx="1"/><rect x="1581.5" y="679.40" width="9" height="3" rx="1"/><rect x="1581.5" y="684.69" width="9" height="3" rx="1"/><rect x="1581.5" y="689.98" width="9" height="3" rx="1"/><rect x="1581.5" y="695.27" width="9" height="3" rx="1"/><rect x="1581.5" y="700.56" width="9" height="3" rx="1"/><rect x="1581.5" y="705.85" width="9" height="3" rx="1"/><rect x="1581.5" y="711.14" width="9" height="3" rx="1"/><rect x="1581.5" y="716.43" width="9" height="3" rx="1"/><rect x="1581.5" y="721.72" width="9" height="3" rx="1"/><rect x="1581.5" y="727.01" width="9" height="3" rx="1"/><rect x="1581.5" y="732.30" width="9" height="3" rx="1"/><rect x="1581.5" y="737.59" width="9" height="3" rx="1"/><rect x="1581.5" y="742.88" width="9" height="3" rx="1"/><rect x="1581.5" y="748.17" width="9" height="3" rx="1"/><rect x="1581.5" y="753.46" width="9" height="3" rx="1"/><rect x="1581.5" y="758.75" width="9" height="3" rx="1"/><rect x="1581.5" y="764.04" width="9" height="3" rx="1"/><rect x="1581.5" y="769.33" width="9" height="3" rx="1"/><rect x="1581.5" y="774.62" width="9" height="3" rx="1"/><rect x="1581.5" y="779.91" width="9" height="3" rx="1"/><rect x="1581.5" y="785.20" width="9" height="3" rx="1"/><rect x="1581.5" y="790.49" width="9" height="3" rx="1"/><rect x="1581.5" y="795.78" width="9" height="3" rx="1"/><rect x="1581.5" y="801.07" width="9" height="3" rx="1"/><rect x="1581.5" y="806.36" width="9" height="3" rx="1"/><rect x="1581.5" y="811.65" width="9" height="3" rx="1"/><rect x="1581.5" y="816.94" width="9" height="3" rx="1"/><rect x="1581.5" y="822.23" width="9" height="3" rx="1"/><rect x="1581.5" y="827.52" width="9" height="3" rx="1"/><rect x="1581.5" y="832.81" width="9" height="3" rx="1"/><rect x="1581.5" y="838.10" width="9" height="3" rx="1"/><rect x="1581.5" y="843.39" width="9" height="3" rx="1"/><rect x="1581.5" y="848.68" width="9" height="3" rx="1"/><rect x="1581.5" y="853.97" width="9" height="3" rx="1"/><rect x="1581.5" y="859.26" width="9" height="3" rx="1"/></g>
<path d="M1555.500 522.0h5M1555.500 567.7h5M1555.500 615.3h5M1555.500 661.0h5M1555.500 708.6h5M1555.500 762.3h5M1555.500 814.6h5" stroke="#6f7288" stroke-width="1.200"/>
<g fill="#3b3e52"><circle cx="1559.500" cy="531.1" r=".7"/><circle cx="1559.500" cy="540.3" r=".7"/><circle cx="1559.500" cy="549.4" r=".7"/><circle cx="1559.500" cy="558.6" r=".7"/><circle cx="1559.500" cy="577.2" r=".7"/><circle cx="1559.500" cy="586.7" r=".7"/><circle cx="1559.500" cy="596.3" r=".7"/><circle cx="1559.500" cy="605.8" r=".7"/><circle cx="1559.500" cy="624.4" r=".7"/><circle cx="1559.500" cy="633.6" r=".7"/><circle cx="1559.500" cy="642.7" r=".7"/><circle cx="1559.500" cy="651.9" r=".7"/><circle cx="1559.500" cy="670.5" r=".7"/><circle cx="1559.500" cy="680.0" r=".7"/><circle cx="1559.500" cy="689.6" r=".7"/><circle cx="1559.500" cy="699.1" r=".7"/><circle cx="1559.500" cy="719.3" r=".7"/><circle cx="1559.500" cy="730.1" r=".7"/><circle cx="1559.500" cy="740.8" r=".7"/><circle cx="1559.500" cy="751.6" r=".7"/><circle cx="1559.500" cy="772.8" r=".7"/><circle cx="1559.500" cy="783.2" r=".7"/><circle cx="1559.500" cy="793.7" r=".7"/><circle cx="1559.500" cy="804.1" r=".7"/></g>
<path d="M1570 880.0h9M1581 880.0h9M1570 882.5h9M1581 882.5h9M1570 885.1h9M1581 885.1h9M1570 887.6h9M1581 887.6h9M1570 890.2h9M1581 890.2h9M1570 892.8h9M1581 892.8h9M1570 895.3h9M1581 895.3h9" stroke="#3b3e52" stroke-width="1.500"/>
<path d="M1556.500 879v21" stroke="#2a2c38" stroke-width="1"/>
</svg>
<div class="ml" style="left:1522px;top:517.0px">0</div>
<div class="ml" style="left:1522px;top:562.7px">-5</div>
<div class="ml" style="left:1522px;top:610.3px">-10</div>
<div class="ml" style="left:1522px;top:656.0px">-15</div>
<div class="ml" style="left:1522px;top:703.6px">-20</div>
<div class="ml" style="left:1522px;top:757.3px">-30</div>
<div class="ml" style="left:1522px;top:809.6px">-40</div>
<div class="abs" style="left:1565.500px;top:861.500px;font-size:10px;line-height:12px;color:#6f7288">L</div>
<div class="abs" style="left:1582.500px;top:861.500px;font-size:10px;line-height:12px;color:#6f7288">R</div>

</div>
</body>
</html>
